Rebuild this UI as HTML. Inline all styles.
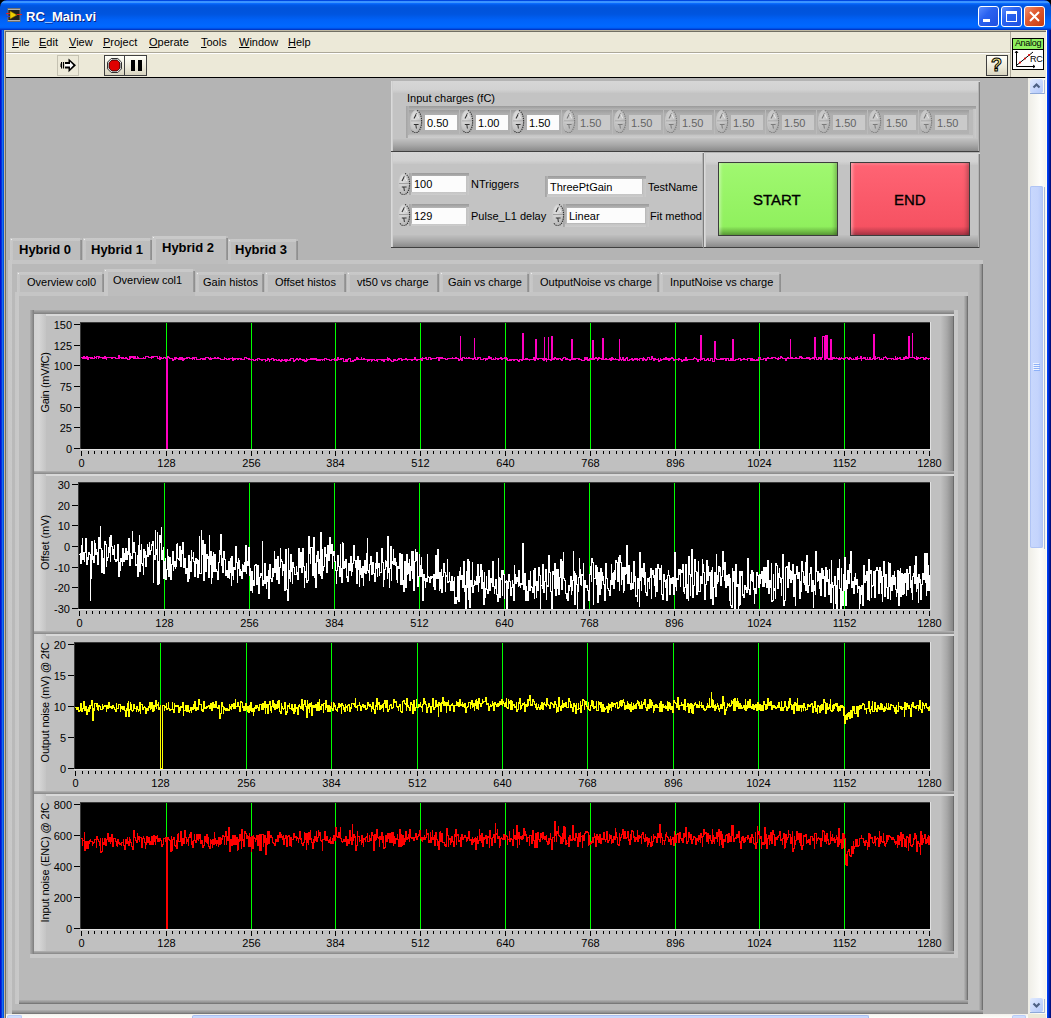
<!DOCTYPE html><html><head><meta charset="utf-8"><style>body{margin:0;width:1051px;height:1018px;overflow:hidden;position:relative;background:#B4B4B4;font-family:'Liberation Sans',sans-serif;}div{box-sizing:content-box}</style></head><body><div style="position:absolute;left:0px;top:0px;width:1051px;height:8px;background:#000;"></div>
<div style="position:absolute;left:0px;top:0px;width:1051px;height:30px;background:linear-gradient(#0047E0 0px,#0047E0 0.8px,#3A93FF 1.2px,#3D95FF 2.6px,#0A6CFF 3.4px,#0058E6 5px,#0053DA 8px,#0055DF 14px,#0062F8 20px,#0068FF 26px,#0060F8 28px,#0040D0 29px,#0030C0 30px);border-radius:7px 7px 0 0;"></div>
<div style="position:absolute;left:0px;top:30px;width:4px;height:988px;background:linear-gradient(90deg,#0010D0 0px,#0010D0 1px,#0830D8 1px,#0830D8 2px,#166EF0 2px,#166EF0 3px,#0050E0 3px);"></div>
<div style="position:absolute;left:1046px;top:30px;width:1px;height:988px;background:#FFFFF4;"></div>
<div style="position:absolute;left:1047px;top:30px;width:4px;height:988px;background:linear-gradient(90deg,#0040F0 0px,#0040F0 1px,#0030D8 1px,#0030D8 2px,#0020A0 2px,#0020A0 3px,#001080 3px);"></div>
<svg style="position:absolute;left:6px;top:8px" width="16" height="15" viewBox="0 0 16 15">
<rect x="2" y="0.5" width="12" height="13" fill="#202020" stroke="#707070"/>
<rect x="2" y="1" width="12" height="1" fill="#b0b0b0"/><rect x="2" y="12" width="12" height="1" fill="#b0b0b0"/>
<path d="M4 3 L11 7 L4 11 Z" fill="#F0D000" stroke="#806000" stroke-width="0.6"/>
<path d="M0 5.5 H4" stroke="#E02020"/><path d="M0 8.5 H4" stroke="#2040E0"/><path d="M11 6.5 H16" stroke="#E02020"/>
</svg>
<div style="position:absolute;left:26px;top:9px;font-size:13px;line-height:15px;font-weight:700;color:#fff;text-shadow:1px 1px 0 #0A1E80;white-space:nowrap">RC_Main.vi</div>
<div style="position:absolute;left:978px;top:6px;width:21px;height:21px;box-sizing:border-box;border:1px solid #fff;border-radius:3px;background:linear-gradient(135deg,#5A8CFF,#2A62F0 40%,#1E50E0);"></div>
<div style="position:absolute;left:1001px;top:6px;width:21px;height:21px;box-sizing:border-box;border:1px solid #fff;border-radius:3px;background:linear-gradient(135deg,#5A8CFF,#2A62F0 40%,#1E50E0);"></div>
<div style="position:absolute;left:1024px;top:6px;width:21px;height:21px;box-sizing:border-box;border:1px solid #fff;border-radius:3px;background:linear-gradient(135deg,#F09070,#E05A30 40%,#C83C10);"></div>
<div style="position:absolute;left:983px;top:19px;width:7px;height:3px;background:#fff;"></div>
<div style="position:absolute;left:1006px;top:11px;width:11px;height:11px;box-sizing:border-box;border:1px solid #fff;border-top:3px solid #fff;"></div>
<svg style="position:absolute;left:1028px;top:10px" width="13" height="13"><path d="M2 2 L11 11 M11 2 L2 11" stroke="#fff" stroke-width="2"/></svg>
<div style="position:absolute;left:4px;top:30px;width:1042px;height:1px;background:#C0B9A2;"></div>
<div style="position:absolute;left:4px;top:31px;width:1042px;height:1px;background:#716F64;"></div>
<div style="position:absolute;left:4px;top:31px;width:1px;height:987px;background:#C0B9A2;"></div>
<div style="position:absolute;left:5px;top:31px;width:1px;height:987px;background:#716F64;"></div>
<div style="position:absolute;left:6px;top:32px;width:1040px;height:45px;background:#ECE9D8;"></div>
<div style="position:absolute;left:6px;top:52px;width:1004px;height:1px;background:#ACA899;"></div>
<div style="position:absolute;left:6px;top:53px;width:1004px;height:1px;background:#FFFFFF;"></div>
<div style="position:absolute;left:1010px;top:32px;width:1px;height:45px;background:#ACA899;"></div>
<div style="position:absolute;left:6px;top:77px;width:1039px;height:1px;background:#000;"></div>
<div style="position:absolute;left:12px;top:36px;font-size:11px;line-height:13px;color:#000;white-space:nowrap"><u style="text-decoration-thickness:1px;text-underline-offset:1px">F</u>ile</div>
<div style="position:absolute;left:39px;top:36px;font-size:11px;line-height:13px;color:#000;white-space:nowrap"><u style="text-decoration-thickness:1px;text-underline-offset:1px">E</u>dit</div>
<div style="position:absolute;left:69px;top:36px;font-size:11px;line-height:13px;color:#000;white-space:nowrap"><u style="text-decoration-thickness:1px;text-underline-offset:1px">V</u>iew</div>
<div style="position:absolute;left:103px;top:36px;font-size:11px;line-height:13px;color:#000;white-space:nowrap"><u style="text-decoration-thickness:1px;text-underline-offset:1px">P</u>roject</div>
<div style="position:absolute;left:149px;top:36px;font-size:11px;line-height:13px;color:#000;white-space:nowrap"><u style="text-decoration-thickness:1px;text-underline-offset:1px">O</u>perate</div>
<div style="position:absolute;left:201px;top:36px;font-size:11px;line-height:13px;color:#000;white-space:nowrap"><u style="text-decoration-thickness:1px;text-underline-offset:1px">T</u>ools</div>
<div style="position:absolute;left:239px;top:36px;font-size:11px;line-height:13px;color:#000;white-space:nowrap"><u style="text-decoration-thickness:1px;text-underline-offset:1px">W</u>indow</div>
<div style="position:absolute;left:288px;top:36px;font-size:11px;line-height:13px;color:#000;white-space:nowrap"><u style="text-decoration-thickness:1px;text-underline-offset:1px">H</u>elp</div>
<div style="position:absolute;left:57px;top:55px;width:22px;height:21px;box-sizing:border-box;border:1px solid #C5C2B2;background:#ECE9D8;"></div>
<svg style="position:absolute;left:59px;top:57px" width="19" height="17" viewBox="0 0 19 17">
<path d="M2 5 H9.5 V1.5 L17 8.3 L9.5 15.2 V11.6 H2 Z" fill="#000"/>
<path d="M6 7 H11 V4.8 L14.4 8.3 L11 11.8 V9.6 H6 Z" fill="#fff"/>
<path d="M3.5 0 V17 M5.5 0 V17" stroke="#ECE9D8" stroke-width="0.9"/>
<path d="M2 6.5 V10 M4.5 6.5 V10" stroke="#000" stroke-width="1"/>
</svg>
<div style="position:absolute;left:104px;top:55px;width:21px;height:21px;box-sizing:border-box;border:1px solid #404040;background:linear-gradient(#FFFFF8,#ECE9D8 60%,#D8D4C0);"></div>
<svg style="position:absolute;left:106px;top:57px" width="17" height="17" viewBox="0 0 17 17"><path d="M5.2 1.5 H11.8 L15.5 5.2 V11.8 L11.8 15.5 H5.2 L1.5 11.8 V5.2 Z" fill="#fff" stroke="#303030" stroke-width="1"/><path d="M5.8 3 H11.2 L14 5.8 V11.2 L11.2 14 H5.8 L3 11.2 V5.8 Z" fill="#E00000" stroke="#000" stroke-width="0.8"/></svg>
<div style="position:absolute;left:125px;top:55px;width:22px;height:21px;box-sizing:border-box;border:1px solid #404040;border-left:none;background:linear-gradient(#FFFFF8,#ECE9D8 60%,#D8D4C0);"></div>
<div style="position:absolute;left:131px;top:60px;width:4px;height:11px;background:#000;"></div>
<div style="position:absolute;left:138px;top:60px;width:4px;height:11px;background:#000;"></div>
<div style="position:absolute;left:986px;top:55px;width:22px;height:21px;box-sizing:border-box;border:1px solid #404040;background:linear-gradient(#FFFFF8,#ECE9D8 60%,#D8D4C0);"></div>
<div style="position:absolute;left:991px;top:55px;font-size:18px;line-height:20px;font-weight:700;color:#F4E88A;-webkit-text-stroke:1px #000;">?</div>
<div style="position:absolute;left:1012px;top:38px;width:32px;height:32px;box-sizing:border-box;border:1px solid #000;background:#fff;"></div>
<div style="position:absolute;left:1013px;top:39px;width:30px;height:10px;background:#90F060;border-bottom:1px solid #000;"></div>
<div style="position:absolute;left:1013px;top:38px;width:30px;text-align:center;font-size:9px;line-height:11px;color:#000;letter-spacing:-0.3px">Analog</div>
<svg style="position:absolute;left:1013px;top:50px" width="30" height="19" viewBox="0 0 30 19">
<path d="M3.5 1 V16.5 H22" stroke="#000" fill="none"/><path d="M2 3 L3.5 1 L5 3 M20 15 L22 16.5 L20 18" stroke="#000" fill="none"/>
<path d="M4 15 L20 2" stroke="#000"/><circle cx="7" cy="12.5" r="1" fill="#E00000"/><circle cx="12" cy="8.5" r="1" fill="#E00000"/><circle cx="16" cy="5" r="1" fill="#E00000"/>
</svg>
<div style="position:absolute;left:1030px;top:54px;font-size:9px;line-height:11px;color:#000;letter-spacing:-0.2px">RC</div>
<div style="position:absolute;left:1028px;top:78px;width:18px;height:936px;background:linear-gradient(90deg,#EEEDE6,#FDFDFA 70%,#F6F5EE);"></div>
<div style="position:absolute;left:1044px;top:80px;width:1px;height:14px;background:#A8B8D8;"></div>
<div style="position:absolute;left:1030px;top:93px;width:14px;height:1px;background:#8EA8D8;"></div>
<div style="position:absolute;left:1030px;top:79px;width:13px;height:14px;border-radius:2px;background:linear-gradient(135deg,#E0EAFE,#C0D2FC 70%,#B4CAFA);"></div>
<svg style="position:absolute;left:1029px;top:79px" width="15" height="14"><path d="M4.5 8.5 L7.5 5.5 L10.5 8.5" stroke="#4D6185" stroke-width="2.2" fill="none"/></svg>
<div style="position:absolute;left:1044px;top:999px;width:1px;height:14px;background:#A8B8D8;"></div>
<div style="position:absolute;left:1030px;top:1012px;width:14px;height:1px;background:#8EA8D8;"></div>
<div style="position:absolute;left:1030px;top:998px;width:13px;height:14px;border-radius:2px;background:linear-gradient(135deg,#E0EAFE,#C0D2FC 70%,#B4CAFA);"></div>
<svg style="position:absolute;left:1029px;top:998px" width="15" height="14"><path d="M4.5 5.5 L7.5 8.5 L10.5 5.5" stroke="#4D6185" stroke-width="2.2" fill="none"/></svg>
<div style="position:absolute;left:1044px;top:187px;width:1px;height:362px;background:#A8B8D8;"></div>
<div style="position:absolute;left:1030px;top:186px;width:13px;height:362px;border-radius:2px;background:linear-gradient(90deg,#C8D8FD,#C4D4FC 60%,#B4C8F8);box-shadow:inset 0 0 0 1px #B0C4F4;"></div>
<div style="position:absolute;left:1033px;top:363px;width:6px;height:1px;background:#EEF4FE;"></div>
<div style="position:absolute;left:1034px;top:364px;width:6px;height:1px;background:#8CB0F8;"></div>
<div style="position:absolute;left:1033px;top:365px;width:6px;height:1px;background:#EEF4FE;"></div>
<div style="position:absolute;left:1034px;top:366px;width:6px;height:1px;background:#8CB0F8;"></div>
<div style="position:absolute;left:1033px;top:367px;width:6px;height:1px;background:#EEF4FE;"></div>
<div style="position:absolute;left:1034px;top:368px;width:6px;height:1px;background:#8CB0F8;"></div>
<div style="position:absolute;left:1033px;top:369px;width:6px;height:1px;background:#EEF4FE;"></div>
<div style="position:absolute;left:1034px;top:370px;width:6px;height:1px;background:#8CB0F8;"></div>
<div style="position:absolute;left:6px;top:1014px;width:1040px;height:4px;background:linear-gradient(#F3F1EC,#FEFEFB);"></div>
<div style="position:absolute;left:7px;top:1015px;width:15px;height:3px;box-sizing:border-box;border:1px solid #B8CCF8;border-bottom:none;border-radius:2px 2px 0 0;background:#D0DEFD;"></div>
<div style="position:absolute;left:192px;top:1015px;width:677px;height:3px;box-sizing:border-box;border:1px solid #A8BEF0;border-bottom:none;border-radius:2px 2px 0 0;background:#C8D8FD;"></div>
<div style="position:absolute;left:1012px;top:1015px;width:14px;height:3px;box-sizing:border-box;border:1px solid #B8CCF8;border-bottom:none;border-radius:2px 2px 0 0;background:#D0DEFD;"></div>
<div style="position:absolute;left:1028px;top:1014px;width:18px;height:4px;background:#ECE9D8;"></div>
<div style="position:absolute;left:6px;top:78px;width:1022px;height:936px;background:#B4B4B4;"></div>
<div style="position:absolute;left:391px;top:81px;width:589px;height:71px;background:#C3C3C3;"><div style="position:absolute;left:0;top:0;right:0;height:12px;background:linear-gradient(#D6D6D6,#D2D2D2 70%,#C6C6C6);"></div><div style="position:absolute;left:0;bottom:0;right:0;height:13px;background:linear-gradient(#C0C0C0,#A8A8A8 50%,#8A8A8A);border-bottom:1px solid #404040;box-sizing:border-box"></div><div style="position:absolute;left:0;top:0;bottom:1px;width:1px;background:#DADADA;"></div><div style="position:absolute;left:1px;top:0;bottom:1px;width:1px;background:#CFCFCF;"></div><div style="position:absolute;right:0;top:1px;bottom:0;width:1px;background:#7E7E7E;"></div><div style="position:absolute;right:1px;top:1px;bottom:1px;width:1px;background:#B4B4B4;"></div></div>
<div style="position:absolute;left:407px;top:92px;font-size:11px;line-height:13px;font-weight:400;color:#000;white-space:nowrap;">Input charges (fC)</div>
<div style="position:absolute;left:406px;top:106px;width:570px;height:32px;background:#BABABA;"><div style="position:absolute;left:0;top:0;right:0;height:4px;background:linear-gradient(#9A9A9A,#A8A8A8 50%,#B6B6B6);"></div><div style="position:absolute;left:0;top:0;bottom:0;width:3px;background:linear-gradient(90deg,#A4A4A4,#B4B4B4);"></div><div style="position:absolute;left:2px;bottom:0;right:0;height:3px;background:linear-gradient(#C4C4C4,#CDCDCD);"></div><div style="position:absolute;right:0;top:3px;bottom:0;width:3px;background:linear-gradient(90deg,#C2C2C2,#CACACA);"></div></div>
<div style="position:absolute;left:409px;top:110px;width:50px;height:24px;background:linear-gradient(#9C9C9C,#AEAEAE 4px,#B2B2B2);"></div>
<svg style="position:absolute;left:410px;top:110px" width="13" height="23" viewBox="0 0 13 23"><defs><radialGradient id="sg230" cx="0.35" cy="0.3" r="0.8"><stop offset="0" stop-color="#E2E2E2"/><stop offset="0.6" stop-color="#C8C8C8"/><stop offset="1" stop-color="#ABABAB"/></radialGradient></defs><ellipse cx="6" cy="11.5" rx="5.7" ry="11.2" fill="url(#sg230)"/><path d="M6 0.3 A5.7 11.2 0 0 0 0.3 11.5 A5.7 11.2 0 0 0 3 21" stroke="#C8C8C8" stroke-width="0.8" fill="none"/><path d="M7 0.5 A5.7 11.2 0 0 1 6 22.7 A5.7 11.2 0 0 1 1.8 20" stroke="#303030" stroke-width="1.1" stroke-dasharray="1.3 0.9" fill="none"/><path d="M1 11.0 H11" stroke="#A0A0A0" stroke-width="1"/><path d="M1 12.0 H11" stroke="#D0D0D0" stroke-width="0.8"/><path d="M4 8.5 L6.6 3.5" stroke="#303030" stroke-width="1.1" fill="none"/><path d="M6.6 4.0 L8.8 8.5" stroke="#EEEEEE" stroke-width="0.9" fill="none"/><path d="M3.8 14.5 H8.6 M5.8 14.5 L6.4 18.5" stroke="#303030" stroke-width="1" fill="none"/></svg>
<div style="position:absolute;left:425px;top:115px;width:32px;height:15px;background:#FCFCFC;"></div>
<div style="position:absolute;left:427px;top:117px;font-size:11px;line-height:13px;color:#000;white-space:nowrap">0.50</div>
<div style="position:absolute;left:460px;top:110px;width:50px;height:24px;background:linear-gradient(#9C9C9C,#AEAEAE 4px,#B2B2B2);"></div>
<svg style="position:absolute;left:461px;top:110px" width="13" height="23" viewBox="0 0 13 23"><defs><radialGradient id="sg230" cx="0.35" cy="0.3" r="0.8"><stop offset="0" stop-color="#E2E2E2"/><stop offset="0.6" stop-color="#C8C8C8"/><stop offset="1" stop-color="#ABABAB"/></radialGradient></defs><ellipse cx="6" cy="11.5" rx="5.7" ry="11.2" fill="url(#sg230)"/><path d="M6 0.3 A5.7 11.2 0 0 0 0.3 11.5 A5.7 11.2 0 0 0 3 21" stroke="#C8C8C8" stroke-width="0.8" fill="none"/><path d="M7 0.5 A5.7 11.2 0 0 1 6 22.7 A5.7 11.2 0 0 1 1.8 20" stroke="#303030" stroke-width="1.1" stroke-dasharray="1.3 0.9" fill="none"/><path d="M1 11.0 H11" stroke="#A0A0A0" stroke-width="1"/><path d="M1 12.0 H11" stroke="#D0D0D0" stroke-width="0.8"/><path d="M4 8.5 L6.6 3.5" stroke="#303030" stroke-width="1.1" fill="none"/><path d="M6.6 4.0 L8.8 8.5" stroke="#EEEEEE" stroke-width="0.9" fill="none"/><path d="M3.8 14.5 H8.6 M5.8 14.5 L6.4 18.5" stroke="#303030" stroke-width="1" fill="none"/></svg>
<div style="position:absolute;left:476px;top:115px;width:32px;height:15px;background:#FCFCFC;"></div>
<div style="position:absolute;left:478px;top:117px;font-size:11px;line-height:13px;color:#000;white-space:nowrap">1.00</div>
<div style="position:absolute;left:511px;top:110px;width:50px;height:24px;background:linear-gradient(#9C9C9C,#AEAEAE 4px,#B2B2B2);"></div>
<svg style="position:absolute;left:512px;top:110px" width="13" height="23" viewBox="0 0 13 23"><defs><radialGradient id="sg230" cx="0.35" cy="0.3" r="0.8"><stop offset="0" stop-color="#E2E2E2"/><stop offset="0.6" stop-color="#C8C8C8"/><stop offset="1" stop-color="#ABABAB"/></radialGradient></defs><ellipse cx="6" cy="11.5" rx="5.7" ry="11.2" fill="url(#sg230)"/><path d="M6 0.3 A5.7 11.2 0 0 0 0.3 11.5 A5.7 11.2 0 0 0 3 21" stroke="#C8C8C8" stroke-width="0.8" fill="none"/><path d="M7 0.5 A5.7 11.2 0 0 1 6 22.7 A5.7 11.2 0 0 1 1.8 20" stroke="#303030" stroke-width="1.1" stroke-dasharray="1.3 0.9" fill="none"/><path d="M1 11.0 H11" stroke="#A0A0A0" stroke-width="1"/><path d="M1 12.0 H11" stroke="#D0D0D0" stroke-width="0.8"/><path d="M4 8.5 L6.6 3.5" stroke="#303030" stroke-width="1.1" fill="none"/><path d="M6.6 4.0 L8.8 8.5" stroke="#EEEEEE" stroke-width="0.9" fill="none"/><path d="M3.8 14.5 H8.6 M5.8 14.5 L6.4 18.5" stroke="#303030" stroke-width="1" fill="none"/></svg>
<div style="position:absolute;left:527px;top:115px;width:32px;height:15px;background:#FCFCFC;"></div>
<div style="position:absolute;left:529px;top:117px;font-size:11px;line-height:13px;color:#000;white-space:nowrap">1.50</div>
<div style="position:absolute;left:562px;top:110px;width:50px;height:24px;background:linear-gradient(#9C9C9C,#AEAEAE 4px,#B2B2B2);"></div>
<svg style="position:absolute;left:563px;top:110px" width="13" height="23" viewBox="0 0 13 23"><defs><radialGradient id="sg231" cx="0.35" cy="0.3" r="0.8"><stop offset="0" stop-color="#D0D0D0"/><stop offset="0.6" stop-color="#BEBEBE"/><stop offset="1" stop-color="#ABABAB"/></radialGradient></defs><ellipse cx="6" cy="11.5" rx="5.7" ry="11.2" fill="url(#sg231)"/><path d="M6 0.3 A5.7 11.2 0 0 0 0.3 11.5 A5.7 11.2 0 0 0 3 21" stroke="#C8C8C8" stroke-width="0.8" fill="none"/><path d="M7 0.5 A5.7 11.2 0 0 1 6 22.7 A5.7 11.2 0 0 1 1.8 20" stroke="#7A7A7A" stroke-width="1.1" stroke-dasharray="1.3 0.9" fill="none"/><path d="M1 11.0 H11" stroke="#A0A0A0" stroke-width="1"/><path d="M1 12.0 H11" stroke="#D0D0D0" stroke-width="0.8"/><path d="M4 8.5 L6.6 3.5" stroke="#7A7A7A" stroke-width="1.1" fill="none"/><path d="M6.6 4.0 L8.8 8.5" stroke="#EEEEEE" stroke-width="0.9" fill="none"/><path d="M3.8 14.5 H8.6 M5.8 14.5 L6.4 18.5" stroke="#7A7A7A" stroke-width="1" fill="none"/></svg>
<div style="position:absolute;left:578px;top:115px;width:32px;height:15px;background:#CACACA;"></div>
<div style="position:absolute;left:580px;top:117px;font-size:11px;line-height:13px;color:#646464;white-space:nowrap">1.50</div>
<div style="position:absolute;left:613px;top:110px;width:50px;height:24px;background:linear-gradient(#9C9C9C,#AEAEAE 4px,#B2B2B2);"></div>
<svg style="position:absolute;left:614px;top:110px" width="13" height="23" viewBox="0 0 13 23"><defs><radialGradient id="sg231" cx="0.35" cy="0.3" r="0.8"><stop offset="0" stop-color="#D0D0D0"/><stop offset="0.6" stop-color="#BEBEBE"/><stop offset="1" stop-color="#ABABAB"/></radialGradient></defs><ellipse cx="6" cy="11.5" rx="5.7" ry="11.2" fill="url(#sg231)"/><path d="M6 0.3 A5.7 11.2 0 0 0 0.3 11.5 A5.7 11.2 0 0 0 3 21" stroke="#C8C8C8" stroke-width="0.8" fill="none"/><path d="M7 0.5 A5.7 11.2 0 0 1 6 22.7 A5.7 11.2 0 0 1 1.8 20" stroke="#7A7A7A" stroke-width="1.1" stroke-dasharray="1.3 0.9" fill="none"/><path d="M1 11.0 H11" stroke="#A0A0A0" stroke-width="1"/><path d="M1 12.0 H11" stroke="#D0D0D0" stroke-width="0.8"/><path d="M4 8.5 L6.6 3.5" stroke="#7A7A7A" stroke-width="1.1" fill="none"/><path d="M6.6 4.0 L8.8 8.5" stroke="#EEEEEE" stroke-width="0.9" fill="none"/><path d="M3.8 14.5 H8.6 M5.8 14.5 L6.4 18.5" stroke="#7A7A7A" stroke-width="1" fill="none"/></svg>
<div style="position:absolute;left:629px;top:115px;width:32px;height:15px;background:#CACACA;"></div>
<div style="position:absolute;left:631px;top:117px;font-size:11px;line-height:13px;color:#646464;white-space:nowrap">1.50</div>
<div style="position:absolute;left:664px;top:110px;width:50px;height:24px;background:linear-gradient(#9C9C9C,#AEAEAE 4px,#B2B2B2);"></div>
<svg style="position:absolute;left:665px;top:110px" width="13" height="23" viewBox="0 0 13 23"><defs><radialGradient id="sg231" cx="0.35" cy="0.3" r="0.8"><stop offset="0" stop-color="#D0D0D0"/><stop offset="0.6" stop-color="#BEBEBE"/><stop offset="1" stop-color="#ABABAB"/></radialGradient></defs><ellipse cx="6" cy="11.5" rx="5.7" ry="11.2" fill="url(#sg231)"/><path d="M6 0.3 A5.7 11.2 0 0 0 0.3 11.5 A5.7 11.2 0 0 0 3 21" stroke="#C8C8C8" stroke-width="0.8" fill="none"/><path d="M7 0.5 A5.7 11.2 0 0 1 6 22.7 A5.7 11.2 0 0 1 1.8 20" stroke="#7A7A7A" stroke-width="1.1" stroke-dasharray="1.3 0.9" fill="none"/><path d="M1 11.0 H11" stroke="#A0A0A0" stroke-width="1"/><path d="M1 12.0 H11" stroke="#D0D0D0" stroke-width="0.8"/><path d="M4 8.5 L6.6 3.5" stroke="#7A7A7A" stroke-width="1.1" fill="none"/><path d="M6.6 4.0 L8.8 8.5" stroke="#EEEEEE" stroke-width="0.9" fill="none"/><path d="M3.8 14.5 H8.6 M5.8 14.5 L6.4 18.5" stroke="#7A7A7A" stroke-width="1" fill="none"/></svg>
<div style="position:absolute;left:680px;top:115px;width:32px;height:15px;background:#CACACA;"></div>
<div style="position:absolute;left:682px;top:117px;font-size:11px;line-height:13px;color:#646464;white-space:nowrap">1.50</div>
<div style="position:absolute;left:715px;top:110px;width:50px;height:24px;background:linear-gradient(#9C9C9C,#AEAEAE 4px,#B2B2B2);"></div>
<svg style="position:absolute;left:716px;top:110px" width="13" height="23" viewBox="0 0 13 23"><defs><radialGradient id="sg231" cx="0.35" cy="0.3" r="0.8"><stop offset="0" stop-color="#D0D0D0"/><stop offset="0.6" stop-color="#BEBEBE"/><stop offset="1" stop-color="#ABABAB"/></radialGradient></defs><ellipse cx="6" cy="11.5" rx="5.7" ry="11.2" fill="url(#sg231)"/><path d="M6 0.3 A5.7 11.2 0 0 0 0.3 11.5 A5.7 11.2 0 0 0 3 21" stroke="#C8C8C8" stroke-width="0.8" fill="none"/><path d="M7 0.5 A5.7 11.2 0 0 1 6 22.7 A5.7 11.2 0 0 1 1.8 20" stroke="#7A7A7A" stroke-width="1.1" stroke-dasharray="1.3 0.9" fill="none"/><path d="M1 11.0 H11" stroke="#A0A0A0" stroke-width="1"/><path d="M1 12.0 H11" stroke="#D0D0D0" stroke-width="0.8"/><path d="M4 8.5 L6.6 3.5" stroke="#7A7A7A" stroke-width="1.1" fill="none"/><path d="M6.6 4.0 L8.8 8.5" stroke="#EEEEEE" stroke-width="0.9" fill="none"/><path d="M3.8 14.5 H8.6 M5.8 14.5 L6.4 18.5" stroke="#7A7A7A" stroke-width="1" fill="none"/></svg>
<div style="position:absolute;left:731px;top:115px;width:32px;height:15px;background:#CACACA;"></div>
<div style="position:absolute;left:733px;top:117px;font-size:11px;line-height:13px;color:#646464;white-space:nowrap">1.50</div>
<div style="position:absolute;left:766px;top:110px;width:50px;height:24px;background:linear-gradient(#9C9C9C,#AEAEAE 4px,#B2B2B2);"></div>
<svg style="position:absolute;left:767px;top:110px" width="13" height="23" viewBox="0 0 13 23"><defs><radialGradient id="sg231" cx="0.35" cy="0.3" r="0.8"><stop offset="0" stop-color="#D0D0D0"/><stop offset="0.6" stop-color="#BEBEBE"/><stop offset="1" stop-color="#ABABAB"/></radialGradient></defs><ellipse cx="6" cy="11.5" rx="5.7" ry="11.2" fill="url(#sg231)"/><path d="M6 0.3 A5.7 11.2 0 0 0 0.3 11.5 A5.7 11.2 0 0 0 3 21" stroke="#C8C8C8" stroke-width="0.8" fill="none"/><path d="M7 0.5 A5.7 11.2 0 0 1 6 22.7 A5.7 11.2 0 0 1 1.8 20" stroke="#7A7A7A" stroke-width="1.1" stroke-dasharray="1.3 0.9" fill="none"/><path d="M1 11.0 H11" stroke="#A0A0A0" stroke-width="1"/><path d="M1 12.0 H11" stroke="#D0D0D0" stroke-width="0.8"/><path d="M4 8.5 L6.6 3.5" stroke="#7A7A7A" stroke-width="1.1" fill="none"/><path d="M6.6 4.0 L8.8 8.5" stroke="#EEEEEE" stroke-width="0.9" fill="none"/><path d="M3.8 14.5 H8.6 M5.8 14.5 L6.4 18.5" stroke="#7A7A7A" stroke-width="1" fill="none"/></svg>
<div style="position:absolute;left:782px;top:115px;width:32px;height:15px;background:#CACACA;"></div>
<div style="position:absolute;left:784px;top:117px;font-size:11px;line-height:13px;color:#646464;white-space:nowrap">1.50</div>
<div style="position:absolute;left:817px;top:110px;width:50px;height:24px;background:linear-gradient(#9C9C9C,#AEAEAE 4px,#B2B2B2);"></div>
<svg style="position:absolute;left:818px;top:110px" width="13" height="23" viewBox="0 0 13 23"><defs><radialGradient id="sg231" cx="0.35" cy="0.3" r="0.8"><stop offset="0" stop-color="#D0D0D0"/><stop offset="0.6" stop-color="#BEBEBE"/><stop offset="1" stop-color="#ABABAB"/></radialGradient></defs><ellipse cx="6" cy="11.5" rx="5.7" ry="11.2" fill="url(#sg231)"/><path d="M6 0.3 A5.7 11.2 0 0 0 0.3 11.5 A5.7 11.2 0 0 0 3 21" stroke="#C8C8C8" stroke-width="0.8" fill="none"/><path d="M7 0.5 A5.7 11.2 0 0 1 6 22.7 A5.7 11.2 0 0 1 1.8 20" stroke="#7A7A7A" stroke-width="1.1" stroke-dasharray="1.3 0.9" fill="none"/><path d="M1 11.0 H11" stroke="#A0A0A0" stroke-width="1"/><path d="M1 12.0 H11" stroke="#D0D0D0" stroke-width="0.8"/><path d="M4 8.5 L6.6 3.5" stroke="#7A7A7A" stroke-width="1.1" fill="none"/><path d="M6.6 4.0 L8.8 8.5" stroke="#EEEEEE" stroke-width="0.9" fill="none"/><path d="M3.8 14.5 H8.6 M5.8 14.5 L6.4 18.5" stroke="#7A7A7A" stroke-width="1" fill="none"/></svg>
<div style="position:absolute;left:833px;top:115px;width:32px;height:15px;background:#CACACA;"></div>
<div style="position:absolute;left:835px;top:117px;font-size:11px;line-height:13px;color:#646464;white-space:nowrap">1.50</div>
<div style="position:absolute;left:868px;top:110px;width:50px;height:24px;background:linear-gradient(#9C9C9C,#AEAEAE 4px,#B2B2B2);"></div>
<svg style="position:absolute;left:869px;top:110px" width="13" height="23" viewBox="0 0 13 23"><defs><radialGradient id="sg231" cx="0.35" cy="0.3" r="0.8"><stop offset="0" stop-color="#D0D0D0"/><stop offset="0.6" stop-color="#BEBEBE"/><stop offset="1" stop-color="#ABABAB"/></radialGradient></defs><ellipse cx="6" cy="11.5" rx="5.7" ry="11.2" fill="url(#sg231)"/><path d="M6 0.3 A5.7 11.2 0 0 0 0.3 11.5 A5.7 11.2 0 0 0 3 21" stroke="#C8C8C8" stroke-width="0.8" fill="none"/><path d="M7 0.5 A5.7 11.2 0 0 1 6 22.7 A5.7 11.2 0 0 1 1.8 20" stroke="#7A7A7A" stroke-width="1.1" stroke-dasharray="1.3 0.9" fill="none"/><path d="M1 11.0 H11" stroke="#A0A0A0" stroke-width="1"/><path d="M1 12.0 H11" stroke="#D0D0D0" stroke-width="0.8"/><path d="M4 8.5 L6.6 3.5" stroke="#7A7A7A" stroke-width="1.1" fill="none"/><path d="M6.6 4.0 L8.8 8.5" stroke="#EEEEEE" stroke-width="0.9" fill="none"/><path d="M3.8 14.5 H8.6 M5.8 14.5 L6.4 18.5" stroke="#7A7A7A" stroke-width="1" fill="none"/></svg>
<div style="position:absolute;left:884px;top:115px;width:32px;height:15px;background:#CACACA;"></div>
<div style="position:absolute;left:886px;top:117px;font-size:11px;line-height:13px;color:#646464;white-space:nowrap">1.50</div>
<div style="position:absolute;left:919px;top:110px;width:50px;height:24px;background:linear-gradient(#9C9C9C,#AEAEAE 4px,#B2B2B2);"></div>
<svg style="position:absolute;left:920px;top:110px" width="13" height="23" viewBox="0 0 13 23"><defs><radialGradient id="sg231" cx="0.35" cy="0.3" r="0.8"><stop offset="0" stop-color="#D0D0D0"/><stop offset="0.6" stop-color="#BEBEBE"/><stop offset="1" stop-color="#ABABAB"/></radialGradient></defs><ellipse cx="6" cy="11.5" rx="5.7" ry="11.2" fill="url(#sg231)"/><path d="M6 0.3 A5.7 11.2 0 0 0 0.3 11.5 A5.7 11.2 0 0 0 3 21" stroke="#C8C8C8" stroke-width="0.8" fill="none"/><path d="M7 0.5 A5.7 11.2 0 0 1 6 22.7 A5.7 11.2 0 0 1 1.8 20" stroke="#7A7A7A" stroke-width="1.1" stroke-dasharray="1.3 0.9" fill="none"/><path d="M1 11.0 H11" stroke="#A0A0A0" stroke-width="1"/><path d="M1 12.0 H11" stroke="#D0D0D0" stroke-width="0.8"/><path d="M4 8.5 L6.6 3.5" stroke="#7A7A7A" stroke-width="1.1" fill="none"/><path d="M6.6 4.0 L8.8 8.5" stroke="#EEEEEE" stroke-width="0.9" fill="none"/><path d="M3.8 14.5 H8.6 M5.8 14.5 L6.4 18.5" stroke="#7A7A7A" stroke-width="1" fill="none"/></svg>
<div style="position:absolute;left:935px;top:115px;width:32px;height:15px;background:#CACACA;"></div>
<div style="position:absolute;left:937px;top:117px;font-size:11px;line-height:13px;color:#646464;white-space:nowrap">1.50</div>
<div style="position:absolute;left:391px;top:152px;width:313px;height:96px;background:#C3C3C3;"><div style="position:absolute;left:0;top:0;right:0;height:12px;background:linear-gradient(#D6D6D6,#D2D2D2 70%,#C6C6C6);"></div><div style="position:absolute;left:0;bottom:0;right:0;height:13px;background:linear-gradient(#C0C0C0,#A8A8A8 50%,#8A8A8A);border-bottom:1px solid #404040;box-sizing:border-box"></div><div style="position:absolute;left:0;top:0;bottom:1px;width:1px;background:#DADADA;"></div><div style="position:absolute;left:1px;top:0;bottom:1px;width:1px;background:#CFCFCF;"></div><div style="position:absolute;right:0;top:1px;bottom:0;width:1px;background:#7E7E7E;"></div><div style="position:absolute;right:1px;top:1px;bottom:1px;width:1px;background:#B4B4B4;"></div></div>
<div style="position:absolute;left:409px;top:173px;width:60px;height:22px;background:#BABABA;"><div style="position:absolute;left:0;top:0;right:0;height:4px;background:linear-gradient(#9A9A9A,#A8A8A8 50%,#B6B6B6);"></div><div style="position:absolute;left:0;top:0;bottom:0;width:3px;background:linear-gradient(90deg,#A4A4A4,#B4B4B4);"></div><div style="position:absolute;left:2px;bottom:0;right:0;height:3px;background:linear-gradient(#C4C4C4,#CDCDCD);"></div><div style="position:absolute;right:0;top:3px;bottom:0;width:3px;background:linear-gradient(90deg,#C2C2C2,#CACACA);"></div></div>
<svg style="position:absolute;left:398px;top:173px" width="13" height="22" viewBox="0 0 13 22"><defs><radialGradient id="sg220" cx="0.35" cy="0.3" r="0.8"><stop offset="0" stop-color="#E2E2E2"/><stop offset="0.6" stop-color="#C8C8C8"/><stop offset="1" stop-color="#ABABAB"/></radialGradient></defs><ellipse cx="6" cy="11.0" rx="5.7" ry="10.7" fill="url(#sg220)"/><path d="M6 0.3 A5.7 10.7 0 0 0 0.3 11.0 A5.7 10.7 0 0 0 3 20" stroke="#C8C8C8" stroke-width="0.8" fill="none"/><path d="M7 0.5 A5.7 10.7 0 0 1 6 21.7 A5.7 10.7 0 0 1 1.8 19" stroke="#303030" stroke-width="1.1" stroke-dasharray="1.3 0.9" fill="none"/><path d="M1 10.5 H11" stroke="#A0A0A0" stroke-width="1"/><path d="M1 11.5 H11" stroke="#D0D0D0" stroke-width="0.8"/><path d="M4 8.0 L6.6 3.0" stroke="#303030" stroke-width="1.1" fill="none"/><path d="M6.6 3.5 L8.8 8.0" stroke="#EEEEEE" stroke-width="0.9" fill="none"/><path d="M3.8 14.0 H8.6 M5.8 14.0 L6.4 18.0" stroke="#303030" stroke-width="1" fill="none"/></svg>
<div style="position:absolute;left:412px;top:176px;width:54px;height:16px;background:#FCFCFC;"></div>
<div style="position:absolute;left:414px;top:178px;font-size:11px;line-height:13px;color:#000;white-space:nowrap">100</div>
<div style="position:absolute;left:471px;top:178px;font-size:11px;line-height:13px;font-weight:400;color:#000;white-space:nowrap;">NTriggers</div>
<div style="position:absolute;left:409px;top:204px;width:60px;height:22px;background:#BABABA;"><div style="position:absolute;left:0;top:0;right:0;height:4px;background:linear-gradient(#9A9A9A,#A8A8A8 50%,#B6B6B6);"></div><div style="position:absolute;left:0;top:0;bottom:0;width:3px;background:linear-gradient(90deg,#A4A4A4,#B4B4B4);"></div><div style="position:absolute;left:2px;bottom:0;right:0;height:3px;background:linear-gradient(#C4C4C4,#CDCDCD);"></div><div style="position:absolute;right:0;top:3px;bottom:0;width:3px;background:linear-gradient(90deg,#C2C2C2,#CACACA);"></div></div>
<svg style="position:absolute;left:398px;top:204px" width="13" height="22" viewBox="0 0 13 22"><defs><radialGradient id="sg220" cx="0.35" cy="0.3" r="0.8"><stop offset="0" stop-color="#E2E2E2"/><stop offset="0.6" stop-color="#C8C8C8"/><stop offset="1" stop-color="#ABABAB"/></radialGradient></defs><ellipse cx="6" cy="11.0" rx="5.7" ry="10.7" fill="url(#sg220)"/><path d="M6 0.3 A5.7 10.7 0 0 0 0.3 11.0 A5.7 10.7 0 0 0 3 20" stroke="#C8C8C8" stroke-width="0.8" fill="none"/><path d="M7 0.5 A5.7 10.7 0 0 1 6 21.7 A5.7 10.7 0 0 1 1.8 19" stroke="#303030" stroke-width="1.1" stroke-dasharray="1.3 0.9" fill="none"/><path d="M1 10.5 H11" stroke="#A0A0A0" stroke-width="1"/><path d="M1 11.5 H11" stroke="#D0D0D0" stroke-width="0.8"/><path d="M4 8.0 L6.6 3.0" stroke="#303030" stroke-width="1.1" fill="none"/><path d="M6.6 3.5 L8.8 8.0" stroke="#EEEEEE" stroke-width="0.9" fill="none"/><path d="M3.8 14.0 H8.6 M5.8 14.0 L6.4 18.0" stroke="#303030" stroke-width="1" fill="none"/></svg>
<div style="position:absolute;left:412px;top:208px;width:54px;height:16px;background:#FCFCFC;"></div>
<div style="position:absolute;left:414px;top:210px;font-size:11px;line-height:13px;color:#000;white-space:nowrap">129</div>
<div style="position:absolute;left:471px;top:210px;font-size:11px;line-height:13px;font-weight:400;color:#000;white-space:nowrap;">Pulse_L1 delay</div>
<div style="position:absolute;left:545px;top:176px;width:101px;height:21px;background:#BABABA;"><div style="position:absolute;left:0;top:0;right:0;height:4px;background:linear-gradient(#9A9A9A,#A8A8A8 50%,#B6B6B6);"></div><div style="position:absolute;left:0;top:0;bottom:0;width:3px;background:linear-gradient(90deg,#A4A4A4,#B4B4B4);"></div><div style="position:absolute;left:2px;bottom:0;right:0;height:3px;background:linear-gradient(#C4C4C4,#CDCDCD);"></div><div style="position:absolute;right:0;top:3px;bottom:0;width:3px;background:linear-gradient(90deg,#C2C2C2,#CACACA);"></div></div>
<div style="position:absolute;left:548px;top:179px;width:94px;height:15px;background:#FCFCFC;"></div>
<div style="position:absolute;left:550px;top:181px;font-size:11px;line-height:13px;color:#000;white-space:nowrap">ThreePtGain</div>
<div style="position:absolute;left:648px;top:181px;font-size:11px;line-height:13px;font-weight:400;color:#000;white-space:nowrap;">TestName</div>
<div style="position:absolute;left:563px;top:204px;width:86px;height:23px;background:#BABABA;"><div style="position:absolute;left:0;top:0;right:0;height:4px;background:linear-gradient(#9A9A9A,#A8A8A8 50%,#B6B6B6);"></div><div style="position:absolute;left:0;top:0;bottom:0;width:3px;background:linear-gradient(90deg,#A4A4A4,#B4B4B4);"></div><div style="position:absolute;left:2px;bottom:0;right:0;height:3px;background:linear-gradient(#C4C4C4,#CDCDCD);"></div><div style="position:absolute;right:0;top:3px;bottom:0;width:3px;background:linear-gradient(90deg,#C2C2C2,#CACACA);"></div></div>
<svg style="position:absolute;left:552px;top:204px" width="13" height="22" viewBox="0 0 13 22"><defs><radialGradient id="sg220" cx="0.35" cy="0.3" r="0.8"><stop offset="0" stop-color="#E2E2E2"/><stop offset="0.6" stop-color="#C8C8C8"/><stop offset="1" stop-color="#ABABAB"/></radialGradient></defs><ellipse cx="6" cy="11.0" rx="5.7" ry="10.7" fill="url(#sg220)"/><path d="M6 0.3 A5.7 10.7 0 0 0 0.3 11.0 A5.7 10.7 0 0 0 3 20" stroke="#C8C8C8" stroke-width="0.8" fill="none"/><path d="M7 0.5 A5.7 10.7 0 0 1 6 21.7 A5.7 10.7 0 0 1 1.8 19" stroke="#303030" stroke-width="1.1" stroke-dasharray="1.3 0.9" fill="none"/><path d="M1 10.5 H11" stroke="#A0A0A0" stroke-width="1"/><path d="M1 11.5 H11" stroke="#D0D0D0" stroke-width="0.8"/><path d="M4 8.0 L6.6 3.0" stroke="#303030" stroke-width="1.1" fill="none"/><path d="M6.6 3.5 L8.8 8.0" stroke="#EEEEEE" stroke-width="0.9" fill="none"/><path d="M3.8 14.0 H8.6 M5.8 14.0 L6.4 18.0" stroke="#303030" stroke-width="1" fill="none"/></svg>
<div style="position:absolute;left:567px;top:208px;width:78px;height:15px;background:#FCFCFC;"></div>
<div style="position:absolute;left:569px;top:210px;font-size:11px;line-height:13px;color:#000;white-space:nowrap">Linear</div>
<div style="position:absolute;left:650px;top:210px;font-size:11px;line-height:13px;font-weight:400;color:#000;white-space:nowrap;">Fit method</div>
<div style="position:absolute;left:704px;top:153px;width:276px;height:95px;background:#C3C3C3;"><div style="position:absolute;left:0;top:0;right:0;height:12px;background:linear-gradient(#D6D6D6,#D2D2D2 70%,#C6C6C6);"></div><div style="position:absolute;left:0;bottom:0;right:0;height:13px;background:linear-gradient(#C0C0C0,#A8A8A8 50%,#8A8A8A);border-bottom:1px solid #404040;box-sizing:border-box"></div><div style="position:absolute;left:0;top:0;bottom:1px;width:1px;background:#DADADA;"></div><div style="position:absolute;left:1px;top:0;bottom:1px;width:1px;background:#CFCFCF;"></div><div style="position:absolute;right:0;top:1px;bottom:0;width:1px;background:#7E7E7E;"></div><div style="position:absolute;right:1px;top:1px;bottom:1px;width:1px;background:#B4B4B4;"></div></div>
<div style="position:absolute;left:718px;top:162px;width:120px;height:74px;box-sizing:border-box;border:1px solid #3C3C3C;background:linear-gradient(#A0F870,#90F05E 88%,#5A9A36);box-shadow:inset 4px 0 3px -2px rgba(255,255,255,0.35),inset -4px 0 4px -2px rgba(0,0,0,0.28),inset 0 3px 2px -1px rgba(255,255,255,0.15);"></div>
<div style="position:absolute;left:753px;top:191px;font-size:15px;line-height:17px;font-weight:400;color:#000;white-space:nowrap;-webkit-text-stroke:0.35px #000;">START</div>
<div style="position:absolute;left:850px;top:162px;width:120px;height:74px;box-sizing:border-box;border:1px solid #3C3C3C;background:linear-gradient(#FF6474,#F65262 88%,#A83444);box-shadow:inset 4px 0 3px -2px rgba(255,255,255,0.35),inset -4px 0 4px -2px rgba(0,0,0,0.28),inset 0 3px 2px -1px rgba(255,255,255,0.15);"></div>
<div style="position:absolute;left:894px;top:191px;font-size:15px;line-height:17px;font-weight:400;color:#000;white-space:nowrap;-webkit-text-stroke:0.35px #000;">END</div>
<div style="position:absolute;left:8px;top:260px;width:975px;height:754px;background:#B9B9B9;"><div style="position:absolute;left:0;top:0;right:0;height:4px;background:#C5C5C5;"></div><div style="position:absolute;left:0;top:0;bottom:0;width:4px;background:linear-gradient(90deg,#C6C6C6,#C9C9C9);"></div><div style="position:absolute;right:0;top:4px;bottom:0;width:4px;background:linear-gradient(90deg,#B4B4B4,#8C8C8C 70%,#5E5E5E);"></div><div style="position:absolute;left:4px;bottom:0;right:0;height:4px;background:linear-gradient(#B0B0B0,#8C8C8C 70%,#6A6A6A);"></div></div>
<div style="position:absolute;left:10px;top:238px;width:72px;height:22px;background:#BDBDBD;"><div style="position:absolute;left:0;top:0;right:2px;height:3px;background:linear-gradient(#C9C9C9,#C6C6C6);"></div><div style="position:absolute;left:0;top:0;bottom:0;width:3px;background:linear-gradient(90deg,#C9C9C9,#C5C5C5);"></div><div style="position:absolute;left:1px;top:1px;width:1px;height:1px;background:#F0F0F0;box-shadow:0 0 1px #fff"></div><div style="position:absolute;right:0;top:2px;bottom:0;width:2px;background:linear-gradient(90deg,#A0A0A0,#8A8A8A);"></div></div>
<div style="position:absolute;left:19px;top:242px;font-size:13px;line-height:15px;font-weight:700;color:#000;white-space:nowrap;">Hybrid 0</div>
<div style="position:absolute;left:83px;top:238px;width:69px;height:22px;background:#BDBDBD;"><div style="position:absolute;left:0;top:0;right:2px;height:3px;background:linear-gradient(#C9C9C9,#C6C6C6);"></div><div style="position:absolute;left:0;top:0;bottom:0;width:3px;background:linear-gradient(90deg,#C9C9C9,#C5C5C5);"></div><div style="position:absolute;left:1px;top:1px;width:1px;height:1px;background:#F0F0F0;box-shadow:0 0 1px #fff"></div><div style="position:absolute;right:0;top:2px;bottom:0;width:2px;background:linear-gradient(90deg,#A0A0A0,#8A8A8A);"></div></div>
<div style="position:absolute;left:91px;top:242px;font-size:13px;line-height:15px;font-weight:700;color:#000;white-space:nowrap;">Hybrid 1</div>
<div style="position:absolute;left:228px;top:239px;width:70px;height:21px;background:#BDBDBD;"><div style="position:absolute;left:0;top:0;right:2px;height:3px;background:linear-gradient(#C9C9C9,#C6C6C6);"></div><div style="position:absolute;left:0;top:0;bottom:0;width:3px;background:linear-gradient(90deg,#C9C9C9,#C5C5C5);"></div><div style="position:absolute;left:1px;top:1px;width:1px;height:1px;background:#F0F0F0;box-shadow:0 0 1px #fff"></div><div style="position:absolute;right:0;top:2px;bottom:0;width:2px;background:linear-gradient(90deg,#A0A0A0,#8A8A8A);"></div></div>
<div style="position:absolute;left:235px;top:242px;font-size:13px;line-height:15px;font-weight:700;color:#000;white-space:nowrap;">Hybrid 3</div>
<div style="position:absolute;left:152px;top:236px;width:76px;height:28px;background:#BDBDBD;"><div style="position:absolute;left:0;top:0;right:2px;height:3px;background:#C9C9C9;"></div><div style="position:absolute;left:0;top:0;bottom:0;width:4px;background:#C8C8C8;"></div><div style="position:absolute;left:1px;top:1px;width:1px;height:1px;background:#F0F0F0;"></div><div style="position:absolute;right:0;top:2px;bottom:4px;width:2px;background:linear-gradient(90deg,#A0A0A0,#8A8A8A);"></div></div>
<div style="position:absolute;left:162px;top:240px;font-size:13px;line-height:15px;font-weight:700;color:#000;white-space:nowrap;">Hybrid 2</div>
<div style="position:absolute;left:15px;top:292px;width:953px;height:712px;background:#B9B9B9;"><div style="position:absolute;left:0;top:0;right:0;height:4px;background:#C5C5C5;"></div><div style="position:absolute;left:0;top:0;bottom:0;width:4px;background:linear-gradient(90deg,#C6C6C6,#C9C9C9);"></div><div style="position:absolute;right:0;top:4px;bottom:0;width:4px;background:linear-gradient(90deg,#B4B4B4,#8C8C8C 70%,#5E5E5E);"></div><div style="position:absolute;left:4px;bottom:0;right:0;height:4px;background:linear-gradient(#B0B0B0,#8C8C8C 70%,#6A6A6A);"></div></div>
<div style="position:absolute;left:17px;top:272px;width:87px;height:20px;background:#BDBDBD;"><div style="position:absolute;left:0;top:0;right:2px;height:3px;background:linear-gradient(#C9C9C9,#C6C6C6);"></div><div style="position:absolute;left:0;top:0;bottom:0;width:3px;background:linear-gradient(90deg,#C9C9C9,#C5C5C5);"></div><div style="position:absolute;left:1px;top:1px;width:1px;height:1px;background:#F0F0F0;box-shadow:0 0 1px #fff"></div><div style="position:absolute;right:0;top:2px;bottom:0;width:2px;background:linear-gradient(90deg,#A0A0A0,#8A8A8A);"></div></div>
<div style="position:absolute;left:27px;top:276px;font-size:11px;line-height:13px;font-weight:400;color:#000;white-space:nowrap;">Overview col0</div>
<div style="position:absolute;left:196px;top:272px;width:68px;height:20px;background:#BDBDBD;"><div style="position:absolute;left:0;top:0;right:2px;height:3px;background:linear-gradient(#C9C9C9,#C6C6C6);"></div><div style="position:absolute;left:0;top:0;bottom:0;width:3px;background:linear-gradient(90deg,#C9C9C9,#C5C5C5);"></div><div style="position:absolute;left:1px;top:1px;width:1px;height:1px;background:#F0F0F0;box-shadow:0 0 1px #fff"></div><div style="position:absolute;right:0;top:2px;bottom:0;width:2px;background:linear-gradient(90deg,#A0A0A0,#8A8A8A);"></div></div>
<div style="position:absolute;left:203px;top:276px;font-size:11px;line-height:13px;font-weight:400;color:#000;white-space:nowrap;">Gain histos</div>
<div style="position:absolute;left:265px;top:272px;width:81px;height:20px;background:#BDBDBD;"><div style="position:absolute;left:0;top:0;right:2px;height:3px;background:linear-gradient(#C9C9C9,#C6C6C6);"></div><div style="position:absolute;left:0;top:0;bottom:0;width:3px;background:linear-gradient(90deg,#C9C9C9,#C5C5C5);"></div><div style="position:absolute;left:1px;top:1px;width:1px;height:1px;background:#F0F0F0;box-shadow:0 0 1px #fff"></div><div style="position:absolute;right:0;top:2px;bottom:0;width:2px;background:linear-gradient(90deg,#A0A0A0,#8A8A8A);"></div></div>
<div style="position:absolute;left:275px;top:276px;font-size:11px;line-height:13px;font-weight:400;color:#000;white-space:nowrap;">Offset histos</div>
<div style="position:absolute;left:347px;top:272px;width:92px;height:20px;background:#BDBDBD;"><div style="position:absolute;left:0;top:0;right:2px;height:3px;background:linear-gradient(#C9C9C9,#C6C6C6);"></div><div style="position:absolute;left:0;top:0;bottom:0;width:3px;background:linear-gradient(90deg,#C9C9C9,#C5C5C5);"></div><div style="position:absolute;left:1px;top:1px;width:1px;height:1px;background:#F0F0F0;box-shadow:0 0 1px #fff"></div><div style="position:absolute;right:0;top:2px;bottom:0;width:2px;background:linear-gradient(90deg,#A0A0A0,#8A8A8A);"></div></div>
<div style="position:absolute;left:357px;top:276px;font-size:11px;line-height:13px;font-weight:400;color:#000;white-space:nowrap;">vt50 vs charge</div>
<div style="position:absolute;left:440px;top:272px;width:89px;height:20px;background:#BDBDBD;"><div style="position:absolute;left:0;top:0;right:2px;height:3px;background:linear-gradient(#C9C9C9,#C6C6C6);"></div><div style="position:absolute;left:0;top:0;bottom:0;width:3px;background:linear-gradient(90deg,#C9C9C9,#C5C5C5);"></div><div style="position:absolute;left:1px;top:1px;width:1px;height:1px;background:#F0F0F0;box-shadow:0 0 1px #fff"></div><div style="position:absolute;right:0;top:2px;bottom:0;width:2px;background:linear-gradient(90deg,#A0A0A0,#8A8A8A);"></div></div>
<div style="position:absolute;left:448px;top:276px;font-size:11px;line-height:13px;font-weight:400;color:#000;white-space:nowrap;">Gain vs charge</div>
<div style="position:absolute;left:530px;top:272px;width:129px;height:20px;background:#BDBDBD;"><div style="position:absolute;left:0;top:0;right:2px;height:3px;background:linear-gradient(#C9C9C9,#C6C6C6);"></div><div style="position:absolute;left:0;top:0;bottom:0;width:3px;background:linear-gradient(90deg,#C9C9C9,#C5C5C5);"></div><div style="position:absolute;left:1px;top:1px;width:1px;height:1px;background:#F0F0F0;box-shadow:0 0 1px #fff"></div><div style="position:absolute;right:0;top:2px;bottom:0;width:2px;background:linear-gradient(90deg,#A0A0A0,#8A8A8A);"></div></div>
<div style="position:absolute;left:540px;top:276px;font-size:11px;line-height:13px;font-weight:400;color:#000;white-space:nowrap;">OutputNoise vs charge</div>
<div style="position:absolute;left:660px;top:272px;width:121px;height:20px;background:#BDBDBD;"><div style="position:absolute;left:0;top:0;right:2px;height:3px;background:linear-gradient(#C9C9C9,#C6C6C6);"></div><div style="position:absolute;left:0;top:0;bottom:0;width:3px;background:linear-gradient(90deg,#C9C9C9,#C5C5C5);"></div><div style="position:absolute;left:1px;top:1px;width:1px;height:1px;background:#F0F0F0;box-shadow:0 0 1px #fff"></div><div style="position:absolute;right:0;top:2px;bottom:0;width:2px;background:linear-gradient(90deg,#A0A0A0,#8A8A8A);"></div></div>
<div style="position:absolute;left:670px;top:276px;font-size:11px;line-height:13px;font-weight:400;color:#000;white-space:nowrap;">InputNoise vs charge</div>
<div style="position:absolute;left:104px;top:269px;width:91px;height:27px;background:#BDBDBD;"><div style="position:absolute;left:0;top:0;right:2px;height:3px;background:#C9C9C9;"></div><div style="position:absolute;left:0;top:0;bottom:0;width:4px;background:#C8C8C8;"></div><div style="position:absolute;left:1px;top:1px;width:1px;height:1px;background:#F0F0F0;"></div><div style="position:absolute;right:0;top:2px;bottom:4px;width:2px;background:linear-gradient(90deg,#A0A0A0,#8A8A8A);"></div></div>
<div style="position:absolute;left:113px;top:274px;font-size:11px;line-height:13px;font-weight:400;color:#000;white-space:nowrap;">Overview col1</div>
<div style="position:absolute;left:30px;top:310px;width:928px;height:648px;background:#C8C8C8;"><div style="position:absolute;left:0;top:0;right:4px;height:4px;background:linear-gradient(#ACACAC,#969696 50%,#7E7E7E);"></div><div style="position:absolute;left:0;top:0;bottom:4px;width:4px;background:linear-gradient(90deg,#ACACAC,#969696 50%,#7C7C7C);"></div></div>
<div style="position:absolute;left:34px;top:314px;width:920px;height:160px;background:#C0C0C0;"><div style="position:absolute;left:0;top:0;right:0;height:2px;background:#D9D9D9;"></div><div style="position:absolute;left:0;top:0;bottom:0;width:12px;background:linear-gradient(90deg,#D2D2D2,#D6D6D6 40%,#C4C4C4);"></div><div style="position:absolute;right:0;top:2px;bottom:0;width:14px;background:linear-gradient(90deg,#C2C2C2,#A8A8A8 50%,#888888 90%,#5A5A5A);"></div><div style="position:absolute;left:0;right:0;bottom:0;height:3px;background:linear-gradient(#B4B4B4,#9C9C9C 50%,#858585);"></div></div>
<svg style="position:absolute;left:80px;top:322px" width="851" height="128" shape-rendering="crispEdges"><rect x="0" y="0" width="851" height="128" fill="#E2E2E2"/><rect x="0" y="0" width="850" height="127" fill="#3A3A3A"/><rect x="1" y="1" width="849" height="126" fill="#000"/><g transform="translate(1,1)"><path d="M85.5 0V126M170.5 0V126M254.5 0V126M339.5 0V126M424.5 0V126M509.5 0V126M594.5 0V126M678.5 0V126M763.5 0V126" stroke="#00FF00" stroke-width="1"/><path d="M0.5 34V35M1.5 34V36M2.5 33V36M3.5 33V36M4.5 34V36M5.5 33V36M6.5 33V37M7.5 34V37M8.5 34V35M9.5 34V36M10.5 34V36M11.5 34V36M12.5 35V36M13.5 33V36M14.5 34V35M15.5 33V36M16.5 33V34M17.5 33V36M18.5 33V35M19.5 34V35M20.5 34V35M21.5 34V36M22.5 34V36M23.5 33V36M24.5 33V36M25.5 34V37M26.5 34V35M27.5 34V35M28.5 34V35M29.5 34V35M30.5 34V36M31.5 34V36M32.5 34V35M33.5 34V35M34.5 34V36M35.5 35V36M36.5 35V36M37.5 32V36M38.5 32V36M39.5 34V35M40.5 34V36M41.5 34V36M42.5 34V36M43.5 35V36M44.5 34V36M45.5 34V36M46.5 35V37M47.5 36V37M48.5 33V37M49.5 33V36M50.5 33V35M51.5 33V35M52.5 33V36M53.5 33V36M54.5 33V36M55.5 35V36M56.5 33V36M57.5 34V36M58.5 35V36M59.5 35V36M60.5 35V36M61.5 35V36M62.5 34V36M63.5 35V36M64.5 33V36M65.5 33V34M66.5 33V34M67.5 33V35M68.5 34V35M69.5 34V35M70.5 33V36M71.5 33V35M72.5 33V35M73.5 33V34M74.5 33V34M75.5 33V34M76.5 33V36M77.5 35V36M78.5 33V37M79.5 34V37M80.5 34V36M81.5 35V36M82.5 34V36M83.5 34V35M84.5 34V36M85.5 35V126M86.5 33V126M87.5 33V35M88.5 34V36M89.5 35V36M90.5 35V36M91.5 35V38M92.5 36V38M93.5 34V37M94.5 34V37M95.5 34V36M96.5 35V36M97.5 35V37M98.5 34V37M99.5 34V37M100.5 34V37M101.5 34V38M102.5 35V38M103.5 35V37M104.5 35V36M105.5 34V36M106.5 34V36M107.5 34V35M108.5 34V36M109.5 35V36M110.5 35V36M111.5 34V37M112.5 34V36M113.5 34V37M114.5 34V35M115.5 34V37M116.5 36V37M117.5 36V37M118.5 36V37M119.5 35V37M120.5 35V36M121.5 35V37M122.5 35V37M123.5 35V37M124.5 34V37M125.5 34V35M126.5 34V35M127.5 34V36M128.5 35V37M129.5 34V37M130.5 35V37M131.5 35V36M132.5 35V36M133.5 34V36M134.5 34V36M135.5 35V36M136.5 34V36M137.5 34V36M138.5 35V36M139.5 35V37M140.5 36V37M141.5 36V37M142.5 36V37M143.5 34V37M144.5 35V36M145.5 35V37M146.5 36V37M147.5 35V37M148.5 35V37M149.5 35V36M150.5 35V36M151.5 34V38M152.5 35V38M153.5 35V37M154.5 35V37M155.5 35V36M156.5 35V37M157.5 35V37M158.5 35V36M159.5 35V37M160.5 35V37M161.5 36V37M162.5 36V37M163.5 34V37M164.5 34V35M165.5 34V36M166.5 35V36M167.5 35V37M168.5 35V37M169.5 36V37M170.5 36V38M171.5 36V37M172.5 36V38M173.5 37V38M174.5 36V38M175.5 36V37M176.5 35V38M177.5 35V36M178.5 35V37M179.5 36V37M180.5 36V38M181.5 36V38M182.5 36V37M183.5 36V37M184.5 36V39M185.5 37V38M186.5 35V38M187.5 35V37M188.5 36V39M189.5 36V37M190.5 35V37M191.5 35V36M192.5 35V38M193.5 36V38M194.5 36V37M195.5 36V38M196.5 37V38M197.5 36V38M198.5 36V38M199.5 37V39M200.5 36V39M201.5 36V38M202.5 37V38M203.5 36V38M204.5 36V39M205.5 36V39M206.5 36V38M207.5 37V38M208.5 36V38M209.5 35V38M210.5 35V36M211.5 35V36M212.5 35V39M213.5 37V39M214.5 36V38M215.5 35V37M216.5 35V37M217.5 36V38M218.5 35V37M219.5 35V37M220.5 36V37M221.5 36V38M222.5 36V38M223.5 36V39M224.5 37V39M225.5 35V39M226.5 36V38M227.5 36V37M228.5 36V37M229.5 35V37M230.5 35V37M231.5 35V37M232.5 35V37M233.5 35V37M234.5 35V37M235.5 35V38M236.5 36V38M237.5 36V38M238.5 36V38M239.5 36V38M240.5 36V37M241.5 36V38M242.5 36V37M243.5 35V38M244.5 35V36M245.5 35V37M246.5 36V37M247.5 36V37M248.5 36V38M249.5 37V38M250.5 36V38M251.5 36V37M252.5 36V37M253.5 35V38M254.5 37V38M255.5 36V38M256.5 34V38M257.5 34V37M258.5 36V37M259.5 35V37M260.5 35V37M261.5 35V36M262.5 35V39M263.5 38V39M264.5 36V39M265.5 36V39M266.5 36V39M267.5 35V37M268.5 35V36M269.5 35V39M270.5 38V39M271.5 37V39M272.5 37V39M273.5 36V38M274.5 36V38M275.5 34V37M276.5 34V37M277.5 35V37M278.5 36V37M279.5 36V37M280.5 34V37M281.5 36V37M282.5 35V37M283.5 35V37M284.5 36V37M285.5 36V37M286.5 36V39M287.5 36V38M288.5 36V38M289.5 36V37M290.5 36V39M291.5 36V38M292.5 36V37M293.5 36V38M294.5 37V38M295.5 36V38M296.5 36V39M297.5 36V37M298.5 36V37M299.5 36V37M300.5 36V38M301.5 36V38M302.5 36V39M303.5 36V39M304.5 36V37M305.5 36V37M306.5 34V38M307.5 35V38M308.5 35V37M309.5 36V38M310.5 37V39M311.5 38V39M312.5 36V39M313.5 36V38M314.5 36V38M315.5 37V38M316.5 36V38M317.5 35V37M318.5 35V37M319.5 35V36M320.5 35V38M321.5 36V38M322.5 36V37M323.5 36V37M324.5 35V37M325.5 35V37M326.5 36V38M327.5 36V37M328.5 36V37M329.5 36V37M330.5 36V38M331.5 36V38M332.5 36V37M333.5 34V37M334.5 34V37M335.5 36V38M336.5 36V38M337.5 36V37M338.5 36V37M339.5 35V37M340.5 35V38M341.5 34V38M342.5 35V36M343.5 35V36M344.5 34V36M345.5 34V37M346.5 36V37M347.5 34V37M348.5 34V35M349.5 34V37M350.5 35V37M351.5 35V36M352.5 35V36M353.5 35V36M354.5 35V36M355.5 34V36M356.5 34V35M357.5 34V38M358.5 34V38M359.5 34V36M360.5 34V36M361.5 34V36M362.5 35V36M363.5 35V36M364.5 35V37M365.5 36V37M366.5 35V37M367.5 35V36M368.5 35V36M369.5 35V36M370.5 35V36M371.5 34V36M372.5 35V36M373.5 35V36M374.5 34V36M375.5 34V36M376.5 35V36M377.5 35V38M378.5 36V38M379.5 13V37M380.5 35V38M381.5 34V38M382.5 34V35M383.5 34V36M384.5 35V36M385.5 34V36M386.5 35V36M387.5 34V36M388.5 34V36M389.5 35V36M390.5 35V36M391.5 35V37M392.5 35V37M393.5 15V36M394.5 34V37M395.5 36V37M396.5 34V37M397.5 34V36M398.5 34V35M399.5 34V37M400.5 36V37M401.5 36V37M402.5 35V37M403.5 35V36M404.5 35V38M405.5 35V37M406.5 35V37M407.5 33V36M408.5 33V36M409.5 34V36M410.5 34V37M411.5 36V37M412.5 35V37M413.5 36V37M414.5 34V37M415.5 35V36M416.5 35V37M417.5 35V37M418.5 35V36M419.5 34V36M420.5 34V37M421.5 35V37M422.5 35V36M423.5 34V36M424.5 34V36M425.5 34V37M426.5 35V38M427.5 37V38M428.5 36V38M429.5 36V38M430.5 36V38M431.5 36V37M432.5 36V38M433.5 36V38M434.5 36V37M435.5 36V37M436.5 36V38M437.5 37V39M438.5 36V39M439.5 36V37M440.5 36V38M441.5 10V38M442.5 10V37M443.5 36V37M444.5 35V37M445.5 35V37M446.5 35V37M447.5 36V37M448.5 36V38M449.5 36V37M450.5 36V37M451.5 36V37M452.5 34V37M453.5 34V38M454.5 16V38M455.5 16V36M456.5 35V37M457.5 35V37M458.5 35V36M459.5 35V36M460.5 35V36M461.5 35V37M462.5 35V38M463.5 14V38M464.5 35V37M465.5 35V39M466.5 36V37M467.5 14V37M468.5 36V37M469.5 36V38M470.5 13V38M471.5 13V37M472.5 35V37M473.5 34V37M474.5 34V36M475.5 35V37M476.5 35V37M477.5 35V37M478.5 35V36M479.5 35V37M480.5 36V38M481.5 35V38M482.5 34V36M483.5 34V35M484.5 34V37M485.5 35V37M486.5 35V37M487.5 36V37M488.5 36V38M489.5 36V38M490.5 16V37M491.5 16V37M492.5 35V37M493.5 35V37M494.5 35V37M495.5 35V36M496.5 35V36M497.5 35V37M498.5 35V37M499.5 36V37M500.5 36V38M501.5 37V38M502.5 37V38M503.5 34V38M504.5 34V37M505.5 34V37M506.5 34V38M507.5 36V38M508.5 35V38M509.5 35V37M510.5 35V37M511.5 17V37M512.5 17V37M513.5 35V37M514.5 34V36M515.5 34V36M516.5 35V38M517.5 34V37M518.5 34V36M519.5 35V36M520.5 35V37M521.5 15V37M522.5 15V37M523.5 36V37M524.5 35V37M525.5 35V37M526.5 36V37M527.5 36V37M528.5 35V37M529.5 35V38M530.5 34V38M531.5 34V37M532.5 35V37M533.5 36V37M534.5 35V37M535.5 36V37M536.5 36V37M537.5 36V38M538.5 16V38M539.5 34V37M540.5 36V38M541.5 34V37M542.5 34V38M543.5 36V38M544.5 35V38M545.5 34V36M546.5 34V38M547.5 37V38M548.5 36V38M549.5 36V37M550.5 35V37M551.5 35V38M552.5 36V38M553.5 35V37M554.5 35V37M555.5 35V37M556.5 35V38M557.5 36V37M558.5 35V38M559.5 35V36M560.5 35V36M561.5 35V38M562.5 34V38M563.5 35V37M564.5 36V38M565.5 36V38M566.5 34V37M567.5 34V35M568.5 34V37M569.5 36V37M570.5 33V37M571.5 33V36M572.5 35V38M573.5 35V38M574.5 35V37M575.5 36V37M576.5 36V37M577.5 35V39M578.5 37V39M579.5 35V38M580.5 36V38M581.5 36V37M582.5 35V37M583.5 35V37M584.5 34V37M585.5 34V37M586.5 35V37M587.5 35V38M588.5 35V38M589.5 35V37M590.5 34V36M591.5 34V36M592.5 35V38M593.5 36V38M594.5 36V37M595.5 36V37M596.5 36V37M597.5 35V38M598.5 35V37M599.5 36V37M600.5 36V39M601.5 37V39M602.5 36V38M603.5 36V38M604.5 34V38M605.5 34V38M606.5 36V38M607.5 36V37M608.5 36V37M609.5 36V37M610.5 36V37M611.5 36V37M612.5 35V37M613.5 34V36M614.5 35V36M615.5 35V37M616.5 36V39M617.5 36V39M618.5 36V37M619.5 12V38M620.5 12V37M621.5 35V37M622.5 35V36M623.5 35V38M624.5 37V38M625.5 36V38M626.5 35V37M627.5 35V38M628.5 37V38M629.5 35V38M630.5 35V36M631.5 35V39M632.5 38V39M633.5 18V39M634.5 18V36M635.5 35V37M636.5 36V37M637.5 36V37M638.5 36V37M639.5 35V37M640.5 35V37M641.5 35V37M642.5 35V37M643.5 35V36M644.5 35V38M645.5 35V38M646.5 35V36M647.5 35V38M648.5 37V38M649.5 35V38M650.5 35V38M651.5 16V38M652.5 16V38M653.5 37V38M654.5 36V38M655.5 36V37M656.5 36V37M657.5 35V37M658.5 35V36M659.5 35V38M660.5 36V38M661.5 36V37M662.5 35V37M663.5 35V37M664.5 36V37M665.5 36V37M666.5 35V38M667.5 35V36M668.5 35V36M669.5 35V38M670.5 35V38M671.5 35V38M672.5 36V38M673.5 36V38M674.5 37V38M675.5 36V38M676.5 36V38M677.5 34V38M678.5 34V35M679.5 34V37M680.5 36V37M681.5 36V37M682.5 35V37M683.5 35V36M684.5 35V38M685.5 35V38M686.5 34V36M687.5 34V36M688.5 35V36M689.5 35V36M690.5 34V36M691.5 34V36M692.5 34V35M693.5 34V35M694.5 34V36M695.5 35V36M696.5 35V37M697.5 34V37M698.5 35V36M699.5 33V36M700.5 33V35M701.5 34V36M702.5 35V36M703.5 35V36M704.5 35V38M705.5 35V38M706.5 34V36M707.5 34V36M708.5 35V36M709.5 16V36M710.5 34V36M711.5 34V36M712.5 35V36M713.5 35V36M714.5 34V36M715.5 34V36M716.5 35V36M717.5 35V36M718.5 33V36M719.5 33V35M720.5 33V36M721.5 34V36M722.5 35V36M723.5 35V36M724.5 35V36M725.5 34V36M726.5 34V36M727.5 34V36M728.5 34V37M729.5 35V37M730.5 35V36M731.5 34V36M732.5 34V36M733.5 14V37M734.5 14V35M735.5 34V37M736.5 36V37M737.5 34V37M738.5 34V36M739.5 34V37M740.5 34V37M741.5 13V35M742.5 13V14M743.5 13V37M744.5 12V37M745.5 12V36M746.5 12V36M747.5 35V37M748.5 35V37M749.5 16V37M750.5 16V37M751.5 34V37M752.5 34V36M753.5 34V36M754.5 35V36M755.5 34V36M756.5 35V36M757.5 35V37M758.5 34V37M759.5 35V37M760.5 34V36M761.5 35V36M762.5 35V37M763.5 35V37M764.5 34V36M765.5 34V35M766.5 34V36M767.5 35V37M768.5 34V37M769.5 34V36M770.5 35V37M771.5 36V37M772.5 35V37M773.5 36V37M774.5 34V37M775.5 34V37M776.5 33V37M777.5 35V36M778.5 35V36M779.5 33V36M780.5 33V38M781.5 35V36M782.5 34V36M783.5 34V36M784.5 34V37M785.5 36V37M786.5 34V37M787.5 36V37M788.5 34V37M789.5 34V37M790.5 36V37M791.5 35V37M792.5 11V36M793.5 11V37M794.5 33V37M795.5 35V36M796.5 34V36M797.5 34V35M798.5 34V37M799.5 36V37M800.5 35V37M801.5 36V37M802.5 34V37M803.5 34V35M804.5 33V35M805.5 34V36M806.5 35V37M807.5 35V36M808.5 35V36M809.5 35V36M810.5 35V37M811.5 35V36M812.5 35V37M813.5 36V37M814.5 33V37M815.5 35V37M816.5 34V37M817.5 35V36M818.5 34V36M819.5 34V37M820.5 36V37M821.5 36V37M822.5 34V37M823.5 34V37M824.5 33V36M825.5 33V36M826.5 34V36M827.5 13V36M828.5 13V35M829.5 34V35M830.5 34V35M831.5 10V35M832.5 34V35M833.5 34V36M834.5 35V36M835.5 33V37M836.5 34V37M837.5 34V36M838.5 35V36M839.5 34V36M840.5 34V35M841.5 34V35M842.5 34V37M843.5 35V37M844.5 34V37M845.5 34V36M846.5 35V36M847.5 35V37M848.5 35V36" stroke="#FF00C0" stroke-width="1"/></g></svg>
<svg style="position:absolute;left:81px;top:451px" width="850" height="6"><path d="M0.5 0 v5 M7.0 0 v3 M13.5 0 v3 M20.1 0 v3 M26.6 0 v3 M33.1 0 v3 M39.6 0 v3 M46.2 0 v3 M52.7 0 v3 M59.2 0 v3 M65.7 0 v3 M72.3 0 v3 M78.8 0 v3 M85.3 0 v5 M91.8 0 v3 M98.3 0 v3 M104.9 0 v3 M111.4 0 v3 M117.9 0 v3 M124.4 0 v3 M131.0 0 v3 M137.5 0 v3 M144.0 0 v3 M150.5 0 v3 M157.1 0 v3 M163.6 0 v3 M170.1 0 v5 M176.6 0 v3 M183.1 0 v3 M189.7 0 v3 M196.2 0 v3 M202.7 0 v3 M209.2 0 v3 M215.8 0 v3 M222.3 0 v3 M228.8 0 v3 M235.3 0 v3 M241.9 0 v3 M248.4 0 v3 M254.9 0 v5 M261.4 0 v3 M267.9 0 v3 M274.5 0 v3 M281.0 0 v3 M287.5 0 v3 M294.0 0 v3 M300.6 0 v3 M307.1 0 v3 M313.6 0 v3 M320.1 0 v3 M326.7 0 v3 M333.2 0 v3 M339.7 0 v5 M346.2 0 v3 M352.7 0 v3 M359.3 0 v3 M365.8 0 v3 M372.3 0 v3 M378.8 0 v3 M385.4 0 v3 M391.9 0 v3 M398.4 0 v3 M404.9 0 v3 M411.5 0 v3 M418.0 0 v3 M424.5 0 v5 M431.0 0 v3 M437.5 0 v3 M444.1 0 v3 M450.6 0 v3 M457.1 0 v3 M463.6 0 v3 M470.2 0 v3 M476.7 0 v3 M483.2 0 v3 M489.7 0 v3 M496.3 0 v3 M502.8 0 v3 M509.3 0 v5 M515.8 0 v3 M522.3 0 v3 M528.9 0 v3 M535.4 0 v3 M541.9 0 v3 M548.4 0 v3 M555.0 0 v3 M561.5 0 v3 M568.0 0 v3 M574.5 0 v3 M581.1 0 v3 M587.6 0 v3 M594.1 0 v5 M600.6 0 v3 M607.1 0 v3 M613.7 0 v3 M620.2 0 v3 M626.7 0 v3 M633.2 0 v3 M639.8 0 v3 M646.3 0 v3 M652.8 0 v3 M659.3 0 v3 M665.9 0 v3 M672.4 0 v3 M678.9 0 v5 M685.4 0 v3 M691.9 0 v3 M698.5 0 v3 M705.0 0 v3 M711.5 0 v3 M718.0 0 v3 M724.6 0 v3 M731.1 0 v3 M737.6 0 v3 M744.1 0 v3 M750.7 0 v3 M757.2 0 v3 M763.7 0 v5 M770.2 0 v3 M776.7 0 v3 M783.3 0 v3 M789.8 0 v3 M796.3 0 v3 M802.8 0 v3 M809.4 0 v3 M815.9 0 v3 M822.4 0 v3 M828.9 0 v3 M835.5 0 v3 M842.0 0 v3 M848.5 0 v5" stroke="#000" stroke-width="1" shape-rendering="crispEdges"/></svg>
<div style="position:absolute;left:51px;top:457px;width:61px;text-align:center;font-size:11px;line-height:13px;white-space:nowrap">0</div>
<div style="position:absolute;left:136px;top:457px;width:61px;text-align:center;font-size:11px;line-height:13px;white-space:nowrap">128</div>
<div style="position:absolute;left:221px;top:457px;width:61px;text-align:center;font-size:11px;line-height:13px;white-space:nowrap">256</div>
<div style="position:absolute;left:305px;top:457px;width:61px;text-align:center;font-size:11px;line-height:13px;white-space:nowrap">384</div>
<div style="position:absolute;left:390px;top:457px;width:61px;text-align:center;font-size:11px;line-height:13px;white-space:nowrap">512</div>
<div style="position:absolute;left:475px;top:457px;width:61px;text-align:center;font-size:11px;line-height:13px;white-space:nowrap">640</div>
<div style="position:absolute;left:560px;top:457px;width:61px;text-align:center;font-size:11px;line-height:13px;white-space:nowrap">768</div>
<div style="position:absolute;left:645px;top:457px;width:61px;text-align:center;font-size:11px;line-height:13px;white-space:nowrap">896</div>
<div style="position:absolute;left:729px;top:457px;width:61px;text-align:center;font-size:11px;line-height:13px;white-space:nowrap">1024</div>
<div style="position:absolute;left:814px;top:457px;width:61px;text-align:center;font-size:11px;line-height:13px;white-space:nowrap">1152</div>
<div style="position:absolute;left:899px;top:457px;width:61px;text-align:center;font-size:11px;line-height:13px;white-space:nowrap">1280</div>
<div style="position:absolute;left:74px;top:324px;width:6px;height:1px;background:#000"></div>
<div style="position:absolute;left:21px;top:319px;width:51px;text-align:right;font-size:11px;line-height:13px;white-space:nowrap">150</div>
<div style="position:absolute;left:74px;top:345px;width:6px;height:1px;background:#000"></div>
<div style="position:absolute;left:21px;top:340px;width:51px;text-align:right;font-size:11px;line-height:13px;white-space:nowrap">125</div>
<div style="position:absolute;left:74px;top:365px;width:6px;height:1px;background:#000"></div>
<div style="position:absolute;left:21px;top:360px;width:51px;text-align:right;font-size:11px;line-height:13px;white-space:nowrap">100</div>
<div style="position:absolute;left:74px;top:386px;width:6px;height:1px;background:#000"></div>
<div style="position:absolute;left:21px;top:381px;width:51px;text-align:right;font-size:11px;line-height:13px;white-space:nowrap">75</div>
<div style="position:absolute;left:74px;top:407px;width:6px;height:1px;background:#000"></div>
<div style="position:absolute;left:21px;top:402px;width:51px;text-align:right;font-size:11px;line-height:13px;white-space:nowrap">50</div>
<div style="position:absolute;left:74px;top:427px;width:6px;height:1px;background:#000"></div>
<div style="position:absolute;left:21px;top:422px;width:51px;text-align:right;font-size:11px;line-height:13px;white-space:nowrap">25</div>
<div style="position:absolute;left:74px;top:448px;width:6px;height:1px;background:#000"></div>
<div style="position:absolute;left:21px;top:443px;width:51px;text-align:right;font-size:11px;line-height:13px;white-space:nowrap">0</div>
<div style="position:absolute;left:-55px;top:376px;width:200px;height:13px;text-align:center;font-size:11px;line-height:13px;white-space:nowrap;letter-spacing:-0.35px;transform:rotate(-90deg)">Gain (mV/fC)</div>
<div style="position:absolute;left:34px;top:474px;width:920px;height:160px;background:#C0C0C0;"><div style="position:absolute;left:0;top:0;right:0;height:2px;background:#D9D9D9;"></div><div style="position:absolute;left:0;top:0;bottom:0;width:12px;background:linear-gradient(90deg,#D2D2D2,#D6D6D6 40%,#C4C4C4);"></div><div style="position:absolute;right:0;top:2px;bottom:0;width:14px;background:linear-gradient(90deg,#C2C2C2,#A8A8A8 50%,#888888 90%,#5A5A5A);"></div><div style="position:absolute;left:0;right:0;bottom:0;height:3px;background:linear-gradient(#B4B4B4,#9C9C9C 50%,#858585);"></div></div>
<svg style="position:absolute;left:78px;top:482px" width="853" height="128" shape-rendering="crispEdges"><rect x="0" y="0" width="853" height="128" fill="#E2E2E2"/><rect x="0" y="0" width="852" height="127" fill="#3A3A3A"/><rect x="1" y="1" width="851" height="126" fill="#000"/><g transform="translate(1,1)"><path d="M85.5 0V126M170.5 0V126M255.5 0V126M340.5 0V126M425.5 0V126M510.5 0V126M595.5 0V126M680.5 0V126M765.5 0V126" stroke="#00FF00" stroke-width="1"/><path d="M0.5 71V72M1.5 70V81M2.5 62V81M3.5 55V77M4.5 69V77M5.5 69V79M6.5 55V70M7.5 55V82M8.5 74V82M9.5 69V77M10.5 69V72M11.5 71V118M12.5 58V96M13.5 58V77M14.5 73V80M15.5 57V80M16.5 60V72M17.5 66V72M18.5 69V82M19.5 54V82M20.5 54V66M21.5 43V66M22.5 65V90M23.5 67V90M24.5 75V91M25.5 58V91M26.5 58V62M27.5 61V84M28.5 74V78M29.5 64V75M30.5 54V70M31.5 52V79M32.5 52V64M33.5 63V72M34.5 66V72M35.5 62V77M36.5 76V79M37.5 76V79M38.5 61V78M39.5 61V94M40.5 79V94M41.5 75V88M42.5 75V79M43.5 65V83M44.5 65V79M45.5 70V79M46.5 65V77M47.5 65V77M48.5 68V77M49.5 55V72M50.5 55V83M51.5 70V83M52.5 73V76M53.5 48V76M54.5 59V70M55.5 59V70M56.5 69V83M57.5 81V83M58.5 72V94M59.5 62V94M60.5 52V89M61.5 67V89M62.5 61V81M63.5 80V83M64.5 66V92M65.5 66V75M66.5 68V84M67.5 72V84M68.5 61V74M69.5 64V74M70.5 59V72M71.5 67V72M72.5 61V68M73.5 58V63M74.5 58V100M75.5 72V77M76.5 47V77M77.5 66V72M78.5 49V102M79.5 78V102M80.5 52V101M81.5 52V60M82.5 44V77M83.5 67V77M84.5 64V96M85.5 78V96M86.5 75V97M87.5 86V97M88.5 66V87M89.5 73V94M90.5 74V94M91.5 74V97M92.5 81V97M93.5 68V82M94.5 68V88M95.5 78V84M96.5 78V86M97.5 61V84M98.5 60V76M99.5 75V77M100.5 63V78M101.5 63V84M102.5 67V84M103.5 59V71M104.5 59V85M105.5 75V85M106.5 75V91M107.5 85V91M108.5 85V99M109.5 72V99M110.5 72V96M111.5 78V89M112.5 67V89M113.5 74V76M114.5 69V79M115.5 78V94M116.5 75V94M117.5 75V81M118.5 76V95M119.5 77V95M120.5 53V91M121.5 90V91M122.5 47V91M123.5 57V72M124.5 57V98M125.5 61V98M126.5 61V89M127.5 71V89M128.5 71V76M129.5 73V95M130.5 52V95M131.5 68V82M132.5 68V101M133.5 73V95M134.5 69V89M135.5 71V89M136.5 71V89M137.5 86V89M138.5 88V97M139.5 79V97M140.5 67V80M141.5 51V72M142.5 51V83M143.5 75V90M144.5 68V90M145.5 68V77M146.5 76V93M147.5 87V93M148.5 87V95M149.5 78V95M150.5 78V96M151.5 75V90M152.5 73V103M153.5 73V93M154.5 84V97M155.5 84V87M156.5 63V87M157.5 63V80M158.5 79V100M159.5 75V86M160.5 77V93M161.5 86V93M162.5 88V96M163.5 81V96M164.5 82V89M165.5 79V89M166.5 62V89M167.5 62V91M168.5 78V83M169.5 64V83M170.5 64V93M171.5 85V108M172.5 88V108M173.5 88V110M174.5 97V103M175.5 82V103M176.5 81V83M177.5 81V102M178.5 82V102M179.5 82V111M180.5 94V111M181.5 90V95M182.5 90V93M183.5 58V103M184.5 97V103M185.5 80V101M186.5 80V101M187.5 93V106M188.5 93V99M189.5 87V116M190.5 81V116M191.5 81V96M192.5 95V99M193.5 85V99M194.5 85V94M195.5 68V90M196.5 76V90M197.5 76V97M198.5 73V97M199.5 73V101M200.5 84V101M201.5 65V85M202.5 76V79M203.5 78V93M204.5 81V88M205.5 81V108M206.5 66V108M207.5 66V107M208.5 106V118M209.5 65V118M210.5 87V96M211.5 71V99M212.5 71V89M213.5 79V101M214.5 79V85M215.5 84V92M216.5 91V92M217.5 83V92M218.5 89V97M219.5 65V97M220.5 65V85M221.5 69V85M222.5 69V90M223.5 65V90M224.5 65V84M225.5 83V105M226.5 88V95M227.5 80V100M228.5 97V100M229.5 53V98M230.5 53V71M231.5 64V81M232.5 64V65M233.5 64V93M234.5 54V93M235.5 54V95M236.5 80V105M237.5 72V105M238.5 68V79M239.5 68V91M240.5 76V91M241.5 49V93M242.5 49V96M243.5 66V96M244.5 83V88M245.5 64V84M246.5 64V74M247.5 71V90M248.5 62V90M249.5 62V78M250.5 54V78M251.5 54V71M252.5 61V71M253.5 61V86M254.5 68V73M255.5 68V79M256.5 78V88M257.5 87V101M258.5 72V88M259.5 72V84M260.5 83V94M261.5 61V94M262.5 85V100M263.5 59V100M264.5 60V86M265.5 78V86M266.5 76V85M267.5 76V95M268.5 93V99M269.5 80V99M270.5 80V88M271.5 73V88M272.5 73V93M273.5 80V89M274.5 62V81M275.5 62V78M276.5 77V85M277.5 77V101M278.5 73V101M279.5 73V87M280.5 77V104M281.5 77V92M282.5 85V95M283.5 83V95M284.5 83V103M285.5 77V90M286.5 77V91M287.5 70V91M288.5 55V88M289.5 87V90M290.5 81V98M291.5 73V82M292.5 73V92M293.5 79V92M294.5 79V91M295.5 90V99M296.5 80V99M297.5 69V86M298.5 69V94M299.5 80V85M300.5 80V93M301.5 89V90M302.5 65V90M303.5 65V80M304.5 79V104M305.5 86V97M306.5 77V87M307.5 78V84M308.5 53V96M309.5 53V90M310.5 85V105M311.5 63V86M312.5 63V98M313.5 78V81M314.5 66V82M315.5 75V82M316.5 75V83M317.5 79V97M318.5 83V100M319.5 83V86M320.5 70V86M321.5 70V102M322.5 71V102M323.5 71V102M324.5 97V109M325.5 78V109M326.5 78V105M327.5 71V105M328.5 71V92M329.5 80V91M330.5 76V98M331.5 83V98M332.5 68V88M333.5 68V96M334.5 68V108M335.5 78V108M336.5 66V79M337.5 69V78M338.5 69V104M339.5 93V104M340.5 71V94M341.5 82V94M342.5 74V94M343.5 86V118M344.5 91V118M345.5 91V98M346.5 95V105M347.5 95V99M348.5 71V99M349.5 93V95M350.5 94V100M351.5 93V100M352.5 93V96M353.5 93V95M354.5 91V104M355.5 91V107M356.5 72V107M357.5 72V96M358.5 66V96M359.5 66V96M360.5 89V108M361.5 89V106M362.5 86V110M363.5 93V110M364.5 80V94M365.5 80V90M366.5 89V109M367.5 92V94M368.5 76V100M369.5 98V100M370.5 89V99M371.5 98V108M372.5 93V108M373.5 93V108M374.5 98V108M375.5 94V121M376.5 114V121M377.5 114V121M378.5 93V117M379.5 93V119M380.5 88V119M381.5 84V97M382.5 92V97M383.5 92V105M384.5 78V105M385.5 78V109M386.5 102V126M387.5 88V126M388.5 76V105M389.5 76V117M390.5 78V125M391.5 97V125M392.5 97V104M393.5 79V110M394.5 102V110M395.5 97V103M396.5 98V102M397.5 93V102M398.5 81V102M399.5 81V109M400.5 93V100M401.5 81V94M402.5 81V106M403.5 87V106M404.5 99V122M405.5 89V122M406.5 105V115M407.5 93V107M408.5 106V111M409.5 87V111M410.5 87V108M411.5 95V108M412.5 95V100M413.5 78V104M414.5 78V104M415.5 103V111M416.5 96V106M417.5 96V112M418.5 111V119M419.5 75V119M420.5 94V115M421.5 95V115M422.5 87V97M423.5 87V113M424.5 87V92M425.5 91V116M426.5 98V100M427.5 97V126M428.5 98V126M429.5 91V106M430.5 91V99M431.5 98V113M432.5 104V113M433.5 97V105M434.5 101V118M435.5 82V118M436.5 91V101M437.5 94V101M438.5 94V99M439.5 87V104M440.5 87V103M441.5 100V105M442.5 100V102M443.5 60V102M444.5 60V107M445.5 90V107M446.5 90V118M447.5 103V118M448.5 108V118M449.5 97V118M450.5 97V108M451.5 88V108M452.5 103V105M453.5 104V110M454.5 87V110M455.5 85V116M456.5 85V103M457.5 98V115M458.5 98V108M459.5 84V108M460.5 84V93M461.5 92V126M462.5 102V103M463.5 81V106M464.5 81V110M465.5 98V110M466.5 86V99M467.5 86V117M468.5 102V104M469.5 72V104M470.5 72V90M471.5 89V109M472.5 108V126M473.5 88V126M474.5 88V92M475.5 80V106M476.5 80V113M477.5 86V113M478.5 86V106M479.5 86V112M480.5 94V112M481.5 76V95M482.5 76V107M483.5 78V107M484.5 69V96M485.5 95V98M486.5 97V111M487.5 110V116M488.5 110V118M489.5 102V118M490.5 102V108M491.5 93V104M492.5 93V112M493.5 97V108M494.5 68V98M495.5 88V122M496.5 90V122M497.5 92V102M498.5 101V126M499.5 94V109M500.5 75V95M501.5 86V102M502.5 91V103M503.5 91V93M504.5 80V126M505.5 97V126M506.5 97V105M507.5 102V105M508.5 102V108M509.5 107V118M510.5 91V118M511.5 83V92M512.5 75V99M513.5 75V80M514.5 79V122M515.5 95V96M516.5 82V96M517.5 82V102M518.5 84V120M519.5 89V120M520.5 89V112M521.5 85V112M522.5 85V106M523.5 89V98M524.5 93V102M525.5 101V118M526.5 80V118M527.5 80V96M528.5 95V106M529.5 105V108M530.5 107V113M531.5 97V113M532.5 81V102M533.5 90V102M534.5 89V106M535.5 87V106M536.5 77V97M537.5 77V80M538.5 79V99M539.5 74V99M540.5 72V108M541.5 72V80M542.5 79V102M543.5 84V97M544.5 84V110M545.5 84V108M546.5 84V92M547.5 62V91M548.5 62V101M549.5 82V101M550.5 82V101M551.5 100V107M552.5 89V107M553.5 100V106M554.5 78V106M555.5 78V99M556.5 93V114M557.5 112V114M558.5 95V119M559.5 95V106M560.5 69V124M561.5 69V98M562.5 85V108M563.5 85V94M564.5 80V95M565.5 80V102M566.5 89V110M567.5 109V113M568.5 95V113M569.5 95V99M570.5 94V106M571.5 85V95M572.5 85V116M573.5 87V92M574.5 87V95M575.5 92V103M576.5 85V114M577.5 85V109M578.5 81V109M579.5 81V86M580.5 85V97M581.5 85V97M582.5 82V112M583.5 111V117M584.5 91V117M585.5 91V99M586.5 97V105M587.5 96V118M588.5 92V118M589.5 87V93M590.5 92V112M591.5 95V112M592.5 95V101M593.5 94V101M594.5 94V112M595.5 69V112M596.5 69V104M597.5 95V108M598.5 95V97M599.5 86V97M600.5 86V92M601.5 86V104M602.5 87V90M603.5 81V90M604.5 81V109M605.5 104V111M606.5 81V105M607.5 81V116M608.5 101V116M609.5 73V118M610.5 73V92M611.5 91V113M612.5 66V94M613.5 66V115M614.5 102V115M615.5 76V103M616.5 76V89M617.5 88V112M618.5 89V112M619.5 78V109M620.5 108V109M621.5 93V109M622.5 93V101M623.5 76V101M624.5 81V90M625.5 89V117M626.5 101V117M627.5 77V102M628.5 77V98M629.5 83V98M630.5 89V93M631.5 89V116M632.5 87V116M633.5 84V122M634.5 104V122M635.5 89V105M636.5 89V114M637.5 71V114M638.5 92V101M639.5 83V99M640.5 83V89M641.5 84V103M642.5 93V103M643.5 68V94M644.5 68V87M645.5 79V98M646.5 79V105M647.5 92V105M648.5 92V103M649.5 91V103M650.5 91V118M651.5 95V123M652.5 122V125M653.5 85V125M654.5 88V99M655.5 88V126M656.5 81V126M657.5 81V104M658.5 101V104M659.5 101V126M660.5 88V123M661.5 88V122M662.5 88V93M663.5 88V113M664.5 111V115M665.5 102V115M666.5 102V107M667.5 104V110M668.5 75V110M669.5 75V107M670.5 106V112M671.5 91V112M672.5 87V98M673.5 87V99M674.5 89V107M675.5 105V121M676.5 105V111M677.5 89V111M678.5 89V93M679.5 92V105M680.5 91V105M681.5 91V101M682.5 88V96M683.5 88V104M684.5 84V104M685.5 84V104M686.5 84V100M687.5 84V105M688.5 77V105M689.5 77V111M690.5 97V111M691.5 97V105M692.5 80V119M693.5 117V119M694.5 91V118M695.5 105V108M696.5 80V116M697.5 80V83M698.5 82V106M699.5 90V106M700.5 85V95M701.5 94V100M702.5 95V113M703.5 71V96M704.5 71V123M705.5 117V123M706.5 84V118M707.5 83V85M708.5 83V105M709.5 79V105M710.5 79V96M711.5 87V100M712.5 88V100M713.5 81V97M714.5 81V114M715.5 91V114M716.5 91V123M717.5 83V92M718.5 83V96M719.5 89V96M720.5 89V116M721.5 98V116M722.5 78V109M723.5 78V89M724.5 88V100M725.5 93V102M726.5 79V108M727.5 72V108M728.5 72V110M729.5 102V110M730.5 90V103M731.5 84V91M732.5 84V109M733.5 97V109M734.5 97V125M735.5 102V108M736.5 68V112M737.5 68V89M738.5 88V99M739.5 88V98M740.5 90V106M741.5 90V113M742.5 85V113M743.5 85V96M744.5 87V96M745.5 93V114M746.5 84V114M747.5 84V99M748.5 87V99M749.5 96V112M750.5 86V112M751.5 101V120M752.5 77V120M753.5 99V105M754.5 102V126M755.5 93V103M756.5 93V121M757.5 102V126M758.5 85V126M759.5 85V97M760.5 76V106M761.5 105V126M762.5 85V126M763.5 108V123M764.5 91V123M765.5 74V108M766.5 74V123M767.5 97V123M768.5 87V106M769.5 87V101M770.5 81V101M771.5 68V90M772.5 68V105M773.5 98V105M774.5 98V111M775.5 94V111M776.5 90V102M777.5 96V102M778.5 96V110M779.5 103V106M780.5 103V126M781.5 104V121M782.5 102V112M783.5 102V123M784.5 82V123M785.5 82V100M786.5 92V100M787.5 88V98M788.5 88V117M789.5 76V117M790.5 76V118M791.5 87V91M792.5 87V115M793.5 102V104M794.5 88V103M795.5 88V115M796.5 87V115M797.5 84V88M798.5 84V88M799.5 87V111M800.5 84V111M801.5 84V100M802.5 88V111M803.5 93V119M804.5 78V94M805.5 78V114M806.5 91V114M807.5 91V105M808.5 104V116M809.5 79V116M810.5 80V104M811.5 80V117M812.5 94V108M813.5 92V108M814.5 92V102M815.5 88V102M816.5 94V107M817.5 106V114M818.5 87V110M819.5 87V123M820.5 88V123M821.5 85V114M822.5 90V114M823.5 90V112M824.5 91V112M825.5 90V111M826.5 90V100M827.5 86V113M828.5 86V107M829.5 90V107M830.5 83V91M831.5 83V105M832.5 97V110M833.5 93V117M834.5 90V94M835.5 82V101M836.5 73V101M837.5 73V109M838.5 94V106M839.5 91V120M840.5 91V100M841.5 96V117M842.5 101V117M843.5 90V102M844.5 90V97M845.5 70V97M846.5 70V100M847.5 70V113M848.5 70V108M849.5 82V108M850.5 92V108" stroke="#FFFFFF" stroke-width="1"/></g></svg>
<svg style="position:absolute;left:79px;top:611px" width="852" height="6"><path d="M0.5 0 v5 M7.0 0 v3 M13.6 0 v3 M20.1 0 v3 M26.7 0 v3 M33.2 0 v3 M39.7 0 v3 M46.3 0 v3 M52.8 0 v3 M59.3 0 v3 M65.9 0 v3 M72.4 0 v3 M79.0 0 v3 M85.5 0 v5 M92.0 0 v3 M98.6 0 v3 M105.1 0 v3 M111.7 0 v3 M118.2 0 v3 M124.7 0 v3 M131.3 0 v3 M137.8 0 v3 M144.3 0 v3 M150.9 0 v3 M157.4 0 v3 M164.0 0 v3 M170.5 0 v5 M177.0 0 v3 M183.6 0 v3 M190.1 0 v3 M196.7 0 v3 M203.2 0 v3 M209.7 0 v3 M216.3 0 v3 M222.8 0 v3 M229.3 0 v3 M235.9 0 v3 M242.4 0 v3 M249.0 0 v3 M255.5 0 v5 M262.0 0 v3 M268.6 0 v3 M275.1 0 v3 M281.7 0 v3 M288.2 0 v3 M294.7 0 v3 M301.3 0 v3 M307.8 0 v3 M314.3 0 v3 M320.9 0 v3 M327.4 0 v3 M334.0 0 v3 M340.5 0 v5 M347.0 0 v3 M353.6 0 v3 M360.1 0 v3 M366.7 0 v3 M373.2 0 v3 M379.7 0 v3 M386.3 0 v3 M392.8 0 v3 M399.3 0 v3 M405.9 0 v3 M412.4 0 v3 M419.0 0 v3 M425.5 0 v5 M432.0 0 v3 M438.6 0 v3 M445.1 0 v3 M451.7 0 v3 M458.2 0 v3 M464.7 0 v3 M471.3 0 v3 M477.8 0 v3 M484.3 0 v3 M490.9 0 v3 M497.4 0 v3 M504.0 0 v3 M510.5 0 v5 M517.0 0 v3 M523.6 0 v3 M530.1 0 v3 M536.7 0 v3 M543.2 0 v3 M549.7 0 v3 M556.3 0 v3 M562.8 0 v3 M569.3 0 v3 M575.9 0 v3 M582.4 0 v3 M589.0 0 v3 M595.5 0 v5 M602.0 0 v3 M608.6 0 v3 M615.1 0 v3 M621.7 0 v3 M628.2 0 v3 M634.7 0 v3 M641.3 0 v3 M647.8 0 v3 M654.3 0 v3 M660.9 0 v3 M667.4 0 v3 M674.0 0 v3 M680.5 0 v5 M687.0 0 v3 M693.6 0 v3 M700.1 0 v3 M706.7 0 v3 M713.2 0 v3 M719.7 0 v3 M726.3 0 v3 M732.8 0 v3 M739.3 0 v3 M745.9 0 v3 M752.4 0 v3 M759.0 0 v3 M765.5 0 v5 M772.0 0 v3 M778.6 0 v3 M785.1 0 v3 M791.7 0 v3 M798.2 0 v3 M804.7 0 v3 M811.3 0 v3 M817.8 0 v3 M824.3 0 v3 M830.9 0 v3 M837.4 0 v3 M844.0 0 v3 M850.5 0 v5" stroke="#000" stroke-width="1" shape-rendering="crispEdges"/></svg>
<div style="position:absolute;left:49px;top:617px;width:61px;text-align:center;font-size:11px;line-height:13px;white-space:nowrap">0</div>
<div style="position:absolute;left:134px;top:617px;width:61px;text-align:center;font-size:11px;line-height:13px;white-space:nowrap">128</div>
<div style="position:absolute;left:219px;top:617px;width:61px;text-align:center;font-size:11px;line-height:13px;white-space:nowrap">256</div>
<div style="position:absolute;left:304px;top:617px;width:61px;text-align:center;font-size:11px;line-height:13px;white-space:nowrap">384</div>
<div style="position:absolute;left:389px;top:617px;width:61px;text-align:center;font-size:11px;line-height:13px;white-space:nowrap">512</div>
<div style="position:absolute;left:474px;top:617px;width:61px;text-align:center;font-size:11px;line-height:13px;white-space:nowrap">640</div>
<div style="position:absolute;left:559px;top:617px;width:61px;text-align:center;font-size:11px;line-height:13px;white-space:nowrap">768</div>
<div style="position:absolute;left:644px;top:617px;width:61px;text-align:center;font-size:11px;line-height:13px;white-space:nowrap">896</div>
<div style="position:absolute;left:729px;top:617px;width:61px;text-align:center;font-size:11px;line-height:13px;white-space:nowrap">1024</div>
<div style="position:absolute;left:814px;top:617px;width:61px;text-align:center;font-size:11px;line-height:13px;white-space:nowrap">1152</div>
<div style="position:absolute;left:899px;top:617px;width:61px;text-align:center;font-size:11px;line-height:13px;white-space:nowrap">1280</div>
<div style="position:absolute;left:72px;top:484px;width:6px;height:1px;background:#000"></div>
<div style="position:absolute;left:19px;top:479px;width:51px;text-align:right;font-size:11px;line-height:13px;white-space:nowrap">30</div>
<div style="position:absolute;left:72px;top:505px;width:6px;height:1px;background:#000"></div>
<div style="position:absolute;left:19px;top:500px;width:51px;text-align:right;font-size:11px;line-height:13px;white-space:nowrap">20</div>
<div style="position:absolute;left:72px;top:525px;width:6px;height:1px;background:#000"></div>
<div style="position:absolute;left:19px;top:520px;width:51px;text-align:right;font-size:11px;line-height:13px;white-space:nowrap">10</div>
<div style="position:absolute;left:72px;top:546px;width:6px;height:1px;background:#000"></div>
<div style="position:absolute;left:19px;top:541px;width:51px;text-align:right;font-size:11px;line-height:13px;white-space:nowrap">0</div>
<div style="position:absolute;left:72px;top:567px;width:6px;height:1px;background:#000"></div>
<div style="position:absolute;left:19px;top:562px;width:51px;text-align:right;font-size:11px;line-height:13px;white-space:nowrap">-10</div>
<div style="position:absolute;left:72px;top:587px;width:6px;height:1px;background:#000"></div>
<div style="position:absolute;left:19px;top:582px;width:51px;text-align:right;font-size:11px;line-height:13px;white-space:nowrap">-20</div>
<div style="position:absolute;left:72px;top:608px;width:6px;height:1px;background:#000"></div>
<div style="position:absolute;left:19px;top:603px;width:51px;text-align:right;font-size:11px;line-height:13px;white-space:nowrap">-30</div>
<div style="position:absolute;left:-55px;top:536px;width:200px;height:13px;text-align:center;font-size:11px;line-height:13px;white-space:nowrap;letter-spacing:-0.1px;transform:rotate(-90deg)">Offset (mV)</div>
<div style="position:absolute;left:34px;top:634px;width:920px;height:160px;background:#C0C0C0;"><div style="position:absolute;left:0;top:0;right:0;height:2px;background:#D9D9D9;"></div><div style="position:absolute;left:0;top:0;bottom:0;width:12px;background:linear-gradient(90deg,#D2D2D2,#D6D6D6 40%,#C4C4C4);"></div><div style="position:absolute;right:0;top:2px;bottom:0;width:14px;background:linear-gradient(90deg,#C2C2C2,#A8A8A8 50%,#888888 90%,#5A5A5A);"></div><div style="position:absolute;left:0;right:0;bottom:0;height:3px;background:linear-gradient(#B4B4B4,#9C9C9C 50%,#858585);"></div></div>
<svg style="position:absolute;left:74px;top:642px" width="857" height="128" shape-rendering="crispEdges"><rect x="0" y="0" width="857" height="128" fill="#E2E2E2"/><rect x="0" y="0" width="856" height="127" fill="#3A3A3A"/><rect x="1" y="1" width="855" height="126" fill="#000"/><g transform="translate(1,1)"><path d="M85.5 0V126M171.5 0V126M256.5 0V126M342.5 0V126M427.5 0V126M512.5 0V126M598.5 0V126M683.5 0V126M769.5 0V126" stroke="#00FF00" stroke-width="1"/><path d="M0.5 64V65M1.5 64V67M2.5 64V67M3.5 64V69M4.5 67V69M5.5 60V68M6.5 60V69M7.5 65V69M8.5 58V66M9.5 58V68M10.5 63V68M11.5 63V72M12.5 66V72M13.5 64V69M14.5 62V69M15.5 62V66M16.5 57V63M17.5 57V78M18.5 65V78M19.5 60V68M20.5 60V61M21.5 60V64M22.5 60V67M23.5 62V68M24.5 62V64M25.5 63V67M26.5 66V67M27.5 61V67M28.5 63V66M29.5 62V64M30.5 62V64M31.5 62V69M32.5 62V66M33.5 59V66M34.5 59V65M35.5 63V65M36.5 63V66M37.5 62V66M38.5 62V65M39.5 64V67M40.5 66V69M41.5 60V69M42.5 65V66M43.5 61V66M44.5 61V62M45.5 61V69M46.5 63V66M47.5 63V67M48.5 63V67M49.5 63V68M50.5 67V74M51.5 65V74M52.5 60V68M53.5 58V74M54.5 66V74M55.5 59V67M56.5 61V68M57.5 67V69M58.5 61V68M59.5 61V66M60.5 65V66M61.5 63V69M62.5 63V67M63.5 66V69M64.5 59V68M65.5 59V71M66.5 61V62M67.5 61V67M68.5 64V67M69.5 63V65M70.5 64V71M71.5 65V71M72.5 65V68M73.5 63V68M74.5 59V65M75.5 59V67M76.5 59V66M77.5 59V69M78.5 62V69M79.5 62V68M80.5 57V64M81.5 57V66M82.5 61V63M83.5 59V67M84.5 64V67M85.5 62V126M86.5 125V126M87.5 62V126M88.5 62V63M89.5 62V68M90.5 63V65M91.5 60V67M92.5 65V67M93.5 59V66M94.5 65V68M95.5 66V68M96.5 66V67M97.5 59V67M98.5 66V70M99.5 60V70M100.5 62V64M101.5 62V64M102.5 62V64M103.5 62V70M104.5 64V70M105.5 63V68M106.5 63V65M107.5 59V65M108.5 59V73M109.5 67V68M110.5 62V68M111.5 62V69M112.5 62V69M113.5 62V69M114.5 67V70M115.5 64V68M116.5 64V70M117.5 64V67M118.5 61V67M119.5 58V66M120.5 58V68M121.5 64V68M122.5 64V67M123.5 56V67M124.5 56V62M125.5 61V62M126.5 61V68M127.5 66V69M128.5 58V69M129.5 58V66M130.5 64V66M131.5 63V66M132.5 63V65M133.5 62V64M134.5 62V66M135.5 60V66M136.5 60V68M137.5 59V68M138.5 59V65M139.5 61V65M140.5 58V65M141.5 58V65M142.5 64V66M143.5 62V66M144.5 62V76M145.5 70V76M146.5 59V71M147.5 59V64M148.5 63V71M149.5 64V67M150.5 65V68M151.5 65V68M152.5 65V68M153.5 66V68M154.5 61V68M155.5 63V66M156.5 61V67M157.5 61V64M158.5 60V66M159.5 60V66M160.5 56V66M161.5 63V64M162.5 59V64M163.5 59V64M164.5 63V69M165.5 58V69M166.5 58V60M167.5 59V65M168.5 63V68M169.5 63V68M170.5 60V68M171.5 60V67M172.5 63V69M173.5 63V70M174.5 62V70M175.5 59V68M176.5 59V69M177.5 65V69M178.5 65V73M179.5 64V69M180.5 62V66M181.5 62V66M182.5 62V65M183.5 64V68M184.5 61V68M185.5 61V62M186.5 61V67M187.5 60V67M188.5 60V67M189.5 58V65M190.5 58V71M191.5 61V65M192.5 61V71M193.5 61V71M194.5 58V62M195.5 58V68M196.5 63V70M197.5 57V64M198.5 57V65M199.5 60V67M200.5 61V67M201.5 61V66M202.5 58V66M203.5 57V65M204.5 57V69M205.5 68V71M206.5 60V71M207.5 63V66M208.5 65V67M209.5 59V66M210.5 59V72M211.5 68V72M212.5 62V70M213.5 62V64M214.5 60V66M215.5 65V66M216.5 61V67M217.5 61V68M218.5 65V71M219.5 61V71M220.5 61V69M221.5 64V66M222.5 64V72M223.5 62V72M224.5 61V64M225.5 63V66M226.5 56V66M227.5 56V67M228.5 61V68M229.5 57V62M230.5 57V64M231.5 63V75M232.5 57V75M233.5 61V66M234.5 60V70M235.5 60V64M236.5 59V73M237.5 62V73M238.5 62V65M239.5 62V65M240.5 61V65M241.5 61V68M242.5 59V68M243.5 59V68M244.5 56V68M245.5 63V67M246.5 61V67M247.5 61V63M248.5 60V70M249.5 60V61M250.5 57V67M251.5 57V65M252.5 62V69M253.5 62V69M254.5 62V69M255.5 63V69M256.5 59V66M257.5 65V68M258.5 59V68M259.5 60V64M260.5 62V67M261.5 66V68M262.5 64V69M263.5 60V65M264.5 60V65M265.5 61V64M266.5 60V71M267.5 60V63M268.5 62V67M269.5 64V69M270.5 61V69M271.5 63V65M272.5 62V68M273.5 61V63M274.5 61V69M275.5 64V69M276.5 60V66M277.5 60V61M278.5 60V62M279.5 60V64M280.5 55V65M281.5 63V65M282.5 62V68M283.5 62V63M284.5 59V63M285.5 62V68M286.5 63V68M287.5 61V64M288.5 61V65M289.5 62V65M290.5 62V67M291.5 65V67M292.5 59V66M293.5 59V63M294.5 61V64M295.5 61V64M296.5 63V69M297.5 59V66M298.5 59V67M299.5 66V71M300.5 62V71M301.5 55V64M302.5 55V67M303.5 59V62M304.5 59V67M305.5 62V67M306.5 62V66M307.5 61V65M308.5 60V69M309.5 57V61M310.5 57V65M311.5 57V65M312.5 57V69M313.5 66V69M314.5 62V67M315.5 61V63M316.5 61V66M317.5 64V66M318.5 56V65M319.5 56V60M320.5 58V60M321.5 58V64M322.5 63V65M323.5 63V68M324.5 61V64M325.5 61V69M326.5 68V70M327.5 58V70M328.5 57V59M329.5 57V61M330.5 60V62M331.5 55V68M332.5 55V64M333.5 62V65M334.5 64V68M335.5 59V68M336.5 59V62M337.5 61V71M338.5 57V71M339.5 57V68M340.5 64V68M341.5 56V65M342.5 64V65M343.5 61V65M344.5 61V64M345.5 59V64M346.5 63V65M347.5 61V69M348.5 55V62M349.5 55V61M350.5 58V62M351.5 61V70M352.5 64V70M353.5 60V65M354.5 60V64M355.5 63V70M356.5 63V70M357.5 55V64M358.5 55V67M359.5 64V67M360.5 57V65M361.5 57V64M362.5 61V64M363.5 59V74M364.5 59V63M365.5 60V69M366.5 59V69M367.5 54V61M368.5 54V63M369.5 58V63M370.5 59V63M371.5 59V70M372.5 59V63M373.5 57V63M374.5 62V68M375.5 62V68M376.5 61V63M377.5 60V63M378.5 62V69M379.5 62V69M380.5 62V63M381.5 58V63M382.5 59V63M383.5 59V64M384.5 56V64M385.5 56V63M386.5 61V63M387.5 59V64M388.5 61V64M389.5 60V65M390.5 60V70M391.5 64V70M392.5 63V65M393.5 59V64M394.5 59V60M395.5 59V66M396.5 57V62M397.5 57V65M398.5 60V64M399.5 60V68M400.5 57V63M401.5 56V66M402.5 58V66M403.5 55V67M404.5 55V61M405.5 60V64M406.5 60V64M407.5 56V61M408.5 58V60M409.5 58V59M410.5 54V59M411.5 54V62M412.5 60V62M413.5 60V68M414.5 63V68M415.5 61V64M416.5 62V64M417.5 58V63M418.5 60V68M419.5 59V68M420.5 59V62M421.5 61V64M422.5 60V64M423.5 60V64M424.5 58V63M425.5 58V62M426.5 56V62M427.5 56V63M428.5 58V61M429.5 60V64M430.5 59V64M431.5 55V65M432.5 64V66M433.5 56V66M434.5 58V61M435.5 57V67M436.5 57V67M437.5 58V67M438.5 61V63M439.5 61V65M440.5 63V65M441.5 59V69M442.5 66V69M443.5 59V67M444.5 55V61M445.5 55V67M446.5 62V66M447.5 60V63M448.5 60V62M449.5 59V69M450.5 61V69M451.5 61V64M452.5 56V64M453.5 56V63M454.5 52V58M455.5 52V63M456.5 61V63M457.5 56V63M458.5 56V59M459.5 58V62M460.5 61V65M461.5 60V67M462.5 64V67M463.5 61V65M464.5 64V67M465.5 62V67M466.5 59V66M467.5 59V67M468.5 60V67M469.5 59V62M470.5 61V63M471.5 55V64M472.5 55V62M473.5 61V63M474.5 62V66M475.5 59V66M476.5 59V61M477.5 60V62M478.5 61V65M479.5 58V65M480.5 58V62M481.5 61V70M482.5 64V69M483.5 54V69M484.5 54V64M485.5 63V68M486.5 62V68M487.5 57V65M488.5 60V65M489.5 60V64M490.5 59V64M491.5 59V65M492.5 64V65M493.5 55V65M494.5 55V59M495.5 58V65M496.5 61V65M497.5 64V69M498.5 60V69M499.5 60V64M500.5 62V71M501.5 60V71M502.5 66V67M503.5 60V67M504.5 65V66M505.5 58V70M506.5 62V70M507.5 56V63M508.5 56V58M509.5 57V67M510.5 58V62M511.5 58V64M512.5 63V66M513.5 59V67M514.5 66V68M515.5 62V68M516.5 57V63M517.5 57V64M518.5 58V66M519.5 63V66M520.5 63V65M521.5 58V68M522.5 67V68M523.5 58V68M524.5 59V62M525.5 59V65M526.5 59V69M527.5 61V69M528.5 61V69M529.5 64V69M530.5 65V67M531.5 63V66M532.5 63V70M533.5 60V70M534.5 61V67M535.5 61V65M536.5 59V68M537.5 59V64M538.5 60V64M539.5 60V62M540.5 60V65M541.5 59V61M542.5 59V66M543.5 64V66M544.5 58V65M545.5 57V63M546.5 57V64M547.5 57V63M548.5 56V60M549.5 59V67M550.5 62V67M551.5 62V66M552.5 58V66M553.5 60V66M554.5 61V67M555.5 61V69M556.5 59V69M557.5 63V67M558.5 60V67M559.5 62V66M560.5 61V66M561.5 60V66M562.5 57V61M563.5 58V63M564.5 59V66M565.5 62V66M566.5 58V66M567.5 61V66M568.5 59V62M569.5 56V62M570.5 56V65M571.5 64V68M572.5 61V68M573.5 61V66M574.5 56V66M575.5 56V65M576.5 57V65M577.5 59V63M578.5 62V70M579.5 62V68M580.5 61V65M581.5 61V65M582.5 62V65M583.5 64V65M584.5 60V69M585.5 58V69M586.5 58V69M587.5 61V69M588.5 61V65M589.5 63V65M590.5 62V66M591.5 63V66M592.5 58V68M593.5 59V68M594.5 59V66M595.5 60V67M596.5 63V67M597.5 63V70M598.5 57V70M599.5 57V60M600.5 59V61M601.5 60V65M602.5 54V65M603.5 54V67M604.5 62V67M605.5 62V63M606.5 59V63M607.5 61V63M608.5 61V67M609.5 56V67M610.5 56V68M611.5 63V64M612.5 60V64M613.5 60V70M614.5 61V70M615.5 60V66M616.5 60V70M617.5 61V71M618.5 62V71M619.5 60V63M620.5 59V62M621.5 61V65M622.5 61V65M623.5 62V65M624.5 58V65M625.5 62V63M626.5 59V65M627.5 62V65M628.5 62V67M629.5 65V68M630.5 66V68M631.5 63V67M632.5 60V65M633.5 62V65M634.5 55V65M635.5 63V65M636.5 49V64M637.5 56V65M638.5 57V65M639.5 62V68M640.5 61V68M641.5 63V66M642.5 60V64M643.5 62V67M644.5 65V69M645.5 61V66M646.5 61V66M647.5 53V66M648.5 53V63M649.5 59V72M650.5 66V72M651.5 64V68M652.5 60V65M653.5 61V63M654.5 60V64M655.5 62V64M656.5 57V63M657.5 58V61M658.5 56V68M659.5 55V68M660.5 55V68M661.5 58V64M662.5 55V64M663.5 58V66M664.5 60V66M665.5 60V66M666.5 62V66M667.5 64V66M668.5 62V65M669.5 62V67M670.5 56V68M671.5 62V68M672.5 58V66M673.5 58V65M674.5 56V65M675.5 56V65M676.5 63V66M677.5 61V66M678.5 61V67M679.5 62V67M680.5 61V65M681.5 61V68M682.5 59V68M683.5 59V67M684.5 61V67M685.5 61V68M686.5 62V68M687.5 62V68M688.5 58V68M689.5 58V62M690.5 61V67M691.5 61V67M692.5 55V66M693.5 55V63M694.5 59V63M695.5 58V63M696.5 58V67M697.5 62V67M698.5 62V65M699.5 62V65M700.5 63V66M701.5 64V66M702.5 62V65M703.5 59V65M704.5 59V65M705.5 64V68M706.5 58V68M707.5 64V68M708.5 64V68M709.5 58V65M710.5 58V64M711.5 63V68M712.5 64V68M713.5 58V66M714.5 55V65M715.5 55V62M716.5 61V67M717.5 62V67M718.5 61V71M719.5 59V71M720.5 59V63M721.5 60V68M722.5 55V68M723.5 62V68M724.5 62V68M725.5 62V65M726.5 62V69M727.5 62V65M728.5 60V68M729.5 60V65M730.5 64V68M731.5 66V67M732.5 61V67M733.5 61V64M734.5 62V64M735.5 61V64M736.5 60V62M737.5 60V70M738.5 63V70M739.5 58V65M740.5 58V69M741.5 65V69M742.5 62V71M743.5 62V64M744.5 63V70M745.5 62V70M746.5 61V68M747.5 61V67M748.5 56V67M749.5 56V60M750.5 59V71M751.5 60V71M752.5 60V67M753.5 64V67M754.5 61V66M755.5 56V68M756.5 67V69M757.5 62V69M758.5 61V68M759.5 61V66M760.5 60V63M761.5 60V64M762.5 60V68M763.5 63V69M764.5 63V68M765.5 62V68M766.5 62V65M767.5 62V65M768.5 63V73M769.5 64V81M770.5 72V81M771.5 71V77M772.5 70V77M773.5 69V74M774.5 69V76M775.5 67V76M776.5 67V75M777.5 63V75M778.5 63V68M779.5 63V71M780.5 70V71M781.5 63V71M782.5 63V74M783.5 63V74M784.5 62V67M785.5 62V66M786.5 62V66M787.5 60V63M788.5 60V62M789.5 61V67M790.5 65V67M791.5 65V71M792.5 65V66M793.5 58V66M794.5 58V69M795.5 66V71M796.5 63V67M797.5 58V69M798.5 68V69M799.5 59V69M800.5 59V67M801.5 65V69M802.5 62V69M803.5 62V66M804.5 64V67M805.5 60V67M806.5 60V67M807.5 61V67M808.5 65V69M809.5 63V69M810.5 64V68M811.5 60V66M812.5 65V67M813.5 60V67M814.5 64V67M815.5 61V67M816.5 61V63M817.5 62V63M818.5 62V65M819.5 64V69M820.5 64V71M821.5 62V71M822.5 67V69M823.5 59V69M824.5 63V64M825.5 63V66M826.5 63V67M827.5 64V67M828.5 64V65M829.5 59V74M830.5 59V67M831.5 60V67M832.5 60V64M833.5 62V66M834.5 62V66M835.5 65V74M836.5 61V74M837.5 59V64M838.5 59V65M839.5 63V65M840.5 63V66M841.5 62V66M842.5 62V63M843.5 62V68M844.5 57V66M845.5 57V67M846.5 66V70M847.5 59V70M848.5 60V63M849.5 62V66M850.5 60V63M851.5 60V65M852.5 64V66M853.5 64V68M854.5 63V68" stroke="#FFFF00" stroke-width="1"/></g></svg>
<svg style="position:absolute;left:75px;top:771px" width="856" height="6"><path d="M0.5 0 v5 M7.1 0 v3 M13.6 0 v3 M20.2 0 v3 M26.8 0 v3 M33.3 0 v3 M39.9 0 v3 M46.5 0 v3 M53.1 0 v3 M59.6 0 v3 M66.2 0 v3 M72.8 0 v3 M79.3 0 v3 M85.9 0 v5 M92.5 0 v3 M99.0 0 v3 M105.6 0 v3 M112.2 0 v3 M118.7 0 v3 M125.3 0 v3 M131.9 0 v3 M138.5 0 v3 M145.0 0 v3 M151.6 0 v3 M158.2 0 v3 M164.7 0 v3 M171.3 0 v5 M177.9 0 v3 M184.4 0 v3 M191.0 0 v3 M197.6 0 v3 M204.1 0 v3 M210.7 0 v3 M217.3 0 v3 M223.9 0 v3 M230.4 0 v3 M237.0 0 v3 M243.6 0 v3 M250.1 0 v3 M256.7 0 v5 M263.3 0 v3 M269.8 0 v3 M276.4 0 v3 M283.0 0 v3 M289.5 0 v3 M296.1 0 v3 M302.7 0 v3 M309.3 0 v3 M315.8 0 v3 M322.4 0 v3 M329.0 0 v3 M335.5 0 v3 M342.1 0 v5 M348.7 0 v3 M355.2 0 v3 M361.8 0 v3 M368.4 0 v3 M374.9 0 v3 M381.5 0 v3 M388.1 0 v3 M394.7 0 v3 M401.2 0 v3 M407.8 0 v3 M414.4 0 v3 M420.9 0 v3 M427.5 0 v5 M434.1 0 v3 M440.6 0 v3 M447.2 0 v3 M453.8 0 v3 M460.3 0 v3 M466.9 0 v3 M473.5 0 v3 M480.1 0 v3 M486.6 0 v3 M493.2 0 v3 M499.8 0 v3 M506.3 0 v3 M512.9 0 v5 M519.5 0 v3 M526.0 0 v3 M532.6 0 v3 M539.2 0 v3 M545.7 0 v3 M552.3 0 v3 M558.9 0 v3 M565.5 0 v3 M572.0 0 v3 M578.6 0 v3 M585.2 0 v3 M591.7 0 v3 M598.3 0 v5 M604.9 0 v3 M611.4 0 v3 M618.0 0 v3 M624.6 0 v3 M631.1 0 v3 M637.7 0 v3 M644.3 0 v3 M650.9 0 v3 M657.4 0 v3 M664.0 0 v3 M670.6 0 v3 M677.1 0 v3 M683.7 0 v5 M690.3 0 v3 M696.8 0 v3 M703.4 0 v3 M710.0 0 v3 M716.5 0 v3 M723.1 0 v3 M729.7 0 v3 M736.3 0 v3 M742.8 0 v3 M749.4 0 v3 M756.0 0 v3 M762.5 0 v3 M769.1 0 v5 M775.7 0 v3 M782.2 0 v3 M788.8 0 v3 M795.4 0 v3 M801.9 0 v3 M808.5 0 v3 M815.1 0 v3 M821.7 0 v3 M828.2 0 v3 M834.8 0 v3 M841.4 0 v3 M847.9 0 v3 M854.5 0 v5" stroke="#000" stroke-width="1" shape-rendering="crispEdges"/></svg>
<div style="position:absolute;left:45px;top:777px;width:61px;text-align:center;font-size:11px;line-height:13px;white-space:nowrap">0</div>
<div style="position:absolute;left:130px;top:777px;width:61px;text-align:center;font-size:11px;line-height:13px;white-space:nowrap">128</div>
<div style="position:absolute;left:216px;top:777px;width:61px;text-align:center;font-size:11px;line-height:13px;white-space:nowrap">256</div>
<div style="position:absolute;left:301px;top:777px;width:61px;text-align:center;font-size:11px;line-height:13px;white-space:nowrap">384</div>
<div style="position:absolute;left:387px;top:777px;width:61px;text-align:center;font-size:11px;line-height:13px;white-space:nowrap">512</div>
<div style="position:absolute;left:472px;top:777px;width:61px;text-align:center;font-size:11px;line-height:13px;white-space:nowrap">640</div>
<div style="position:absolute;left:557px;top:777px;width:61px;text-align:center;font-size:11px;line-height:13px;white-space:nowrap">768</div>
<div style="position:absolute;left:643px;top:777px;width:61px;text-align:center;font-size:11px;line-height:13px;white-space:nowrap">896</div>
<div style="position:absolute;left:728px;top:777px;width:61px;text-align:center;font-size:11px;line-height:13px;white-space:nowrap">1024</div>
<div style="position:absolute;left:814px;top:777px;width:61px;text-align:center;font-size:11px;line-height:13px;white-space:nowrap">1152</div>
<div style="position:absolute;left:899px;top:777px;width:61px;text-align:center;font-size:11px;line-height:13px;white-space:nowrap">1280</div>
<div style="position:absolute;left:68px;top:644px;width:6px;height:1px;background:#000"></div>
<div style="position:absolute;left:15px;top:639px;width:51px;text-align:right;font-size:11px;line-height:13px;white-space:nowrap">20</div>
<div style="position:absolute;left:68px;top:675px;width:6px;height:1px;background:#000"></div>
<div style="position:absolute;left:15px;top:670px;width:51px;text-align:right;font-size:11px;line-height:13px;white-space:nowrap">15</div>
<div style="position:absolute;left:68px;top:706px;width:6px;height:1px;background:#000"></div>
<div style="position:absolute;left:15px;top:701px;width:51px;text-align:right;font-size:11px;line-height:13px;white-space:nowrap">10</div>
<div style="position:absolute;left:68px;top:737px;width:6px;height:1px;background:#000"></div>
<div style="position:absolute;left:15px;top:732px;width:51px;text-align:right;font-size:11px;line-height:13px;white-space:nowrap">5</div>
<div style="position:absolute;left:68px;top:768px;width:6px;height:1px;background:#000"></div>
<div style="position:absolute;left:15px;top:763px;width:51px;text-align:right;font-size:11px;line-height:13px;white-space:nowrap">0</div>
<div style="position:absolute;left:-55px;top:696px;width:200px;height:13px;text-align:center;font-size:11px;line-height:13px;white-space:nowrap;letter-spacing:-0.16px;transform:rotate(-90deg)">Output noise (mV) @ 2fC</div>
<div style="position:absolute;left:34px;top:794px;width:920px;height:160px;background:#C0C0C0;"><div style="position:absolute;left:0;top:0;right:0;height:2px;background:#D9D9D9;"></div><div style="position:absolute;left:0;top:0;bottom:0;width:12px;background:linear-gradient(90deg,#D2D2D2,#D6D6D6 40%,#C4C4C4);"></div><div style="position:absolute;right:0;top:2px;bottom:0;width:14px;background:linear-gradient(90deg,#C2C2C2,#A8A8A8 50%,#888888 90%,#5A5A5A);"></div><div style="position:absolute;left:0;right:0;bottom:0;height:3px;background:linear-gradient(#B4B4B4,#9C9C9C 50%,#858585);"></div></div>
<svg style="position:absolute;left:80px;top:802px" width="851" height="128" shape-rendering="crispEdges"><rect x="0" y="0" width="851" height="128" fill="#E2E2E2"/><rect x="0" y="0" width="850" height="127" fill="#3A3A3A"/><rect x="1" y="1" width="849" height="126" fill="#000"/><g transform="translate(1,1)"><path d="M85.5 0V126M170.5 0V126M254.5 0V126M339.5 0V126M424.5 0V126M509.5 0V126M594.5 0V126M678.5 0V126M763.5 0V126" stroke="#00FF00" stroke-width="1"/><path d="M0.5 35V36M1.5 35V43M2.5 37V38M3.5 29V48M4.5 38V48M5.5 38V46M6.5 38V46M7.5 38V46M8.5 37V41M9.5 36V39M10.5 38V39M11.5 38V43M12.5 39V41M13.5 36V40M14.5 36V37M15.5 33V45M16.5 33V37M17.5 36V39M18.5 38V43M19.5 35V50M20.5 48V50M21.5 35V49M22.5 39V42M23.5 35V42M24.5 35V43M25.5 36V43M26.5 30V37M27.5 30V39M28.5 34V39M29.5 34V41M30.5 31V39M31.5 31V44M32.5 35V44M33.5 35V36M34.5 35V39M35.5 38V43M36.5 36V44M37.5 36V41M38.5 39V42M39.5 40V42M40.5 39V43M41.5 39V40M42.5 36V43M43.5 42V47M44.5 36V47M45.5 36V41M46.5 34V41M47.5 38V43M48.5 34V43M49.5 36V40M50.5 39V44M51.5 43V47M52.5 27V47M53.5 27V35M54.5 34V38M55.5 37V40M56.5 30V40M57.5 33V37M58.5 33V39M59.5 34V35M60.5 34V45M61.5 35V45M62.5 33V36M63.5 35V40M64.5 39V46M65.5 33V42M66.5 33V40M67.5 34V40M68.5 34V42M69.5 38V42M70.5 33V42M71.5 33V42M72.5 32V42M73.5 32V39M74.5 33V42M75.5 33V36M76.5 32V39M77.5 35V39M78.5 35V39M79.5 35V38M80.5 37V44M81.5 41V44M82.5 35V42M83.5 35V36M84.5 34V39M85.5 34V126M86.5 34V126M87.5 34V37M88.5 36V38M89.5 37V49M90.5 33V49M91.5 36V48M92.5 34V37M93.5 34V43M94.5 42V44M95.5 37V46M96.5 31V46M97.5 30V39M98.5 38V39M99.5 28V39M100.5 28V43M101.5 35V43M102.5 35V41M103.5 27V41M104.5 27V35M105.5 34V41M106.5 36V39M107.5 34V43M108.5 31V35M109.5 29V35M110.5 29V42M111.5 38V45M112.5 37V45M113.5 31V38M114.5 37V40M115.5 31V40M116.5 31V37M117.5 31V38M118.5 31V36M119.5 31V41M120.5 37V41M121.5 37V45M122.5 42V45M123.5 33V43M124.5 33V39M125.5 31V40M126.5 31V41M127.5 34V44M128.5 43V46M129.5 36V46M130.5 37V41M131.5 36V45M132.5 36V42M133.5 29V42M134.5 35V41M135.5 37V43M136.5 37V41M137.5 34V44M138.5 34V42M139.5 34V42M140.5 35V41M141.5 32V37M142.5 32V34M143.5 33V42M144.5 28V34M145.5 28V42M146.5 33V38M147.5 24V38M148.5 24V49M149.5 36V49M150.5 36V43M151.5 32V43M152.5 32V42M153.5 32V42M154.5 32V42M155.5 34V42M156.5 34V48M157.5 36V47M158.5 31V39M159.5 31V38M160.5 26V46M161.5 26V38M162.5 36V44M163.5 28V44M164.5 28V31M165.5 30V36M166.5 32V36M167.5 33V44M168.5 30V44M169.5 34V44M170.5 33V49M171.5 33V46M172.5 32V46M173.5 34V36M174.5 35V39M175.5 32V37M176.5 32V43M177.5 32V43M178.5 31V48M179.5 31V48M180.5 31V48M181.5 31V32M182.5 31V44M183.5 32V40M184.5 32V52M185.5 35V52M186.5 28V42M187.5 28V41M188.5 28V41M189.5 32V35M190.5 32V35M191.5 34V40M192.5 39V41M193.5 40V43M194.5 36V43M195.5 36V39M196.5 32V39M197.5 32V39M198.5 29V35M199.5 29V35M200.5 31V35M201.5 33V37M202.5 32V42M203.5 35V42M204.5 32V36M205.5 32V44M206.5 33V44M207.5 32V34M208.5 32V43M209.5 34V43M210.5 34V44M211.5 36V37M212.5 30V37M213.5 30V35M214.5 33V35M215.5 33V38M216.5 34V36M217.5 35V40M218.5 28V36M219.5 28V37M220.5 35V41M221.5 40V43M222.5 39V43M223.5 29V40M224.5 30V37M225.5 30V47M226.5 30V40M227.5 29V42M228.5 29V37M229.5 27V37M230.5 35V40M231.5 39V46M232.5 36V46M233.5 33V40M234.5 33V38M235.5 28V39M236.5 34V39M237.5 27V35M238.5 29V33M239.5 29V38M240.5 37V39M241.5 36V48M242.5 36V37M243.5 28V37M244.5 28V38M245.5 33V38M246.5 33V38M247.5 37V40M248.5 36V40M249.5 34V41M250.5 38V41M251.5 35V41M252.5 32V41M253.5 32V38M254.5 24V38M255.5 24V34M256.5 33V35M257.5 29V35M258.5 29V35M259.5 24V36M260.5 35V39M261.5 38V40M262.5 36V39M263.5 36V39M264.5 33V39M265.5 33V43M266.5 36V43M267.5 36V41M268.5 27V41M269.5 27V38M270.5 34V42M271.5 21V42M272.5 31V38M273.5 31V35M274.5 33V48M275.5 42V48M276.5 28V43M277.5 33V34M278.5 33V39M279.5 37V38M280.5 32V42M281.5 32V40M282.5 35V44M283.5 35V37M284.5 34V39M285.5 33V35M286.5 30V39M287.5 38V39M288.5 32V39M289.5 35V38M290.5 29V38M291.5 29V33M292.5 32V48M293.5 31V48M294.5 31V38M295.5 26V37M296.5 26V35M297.5 34V36M298.5 33V44M299.5 33V37M300.5 29V37M301.5 29V40M302.5 33V46M303.5 44V46M304.5 32V45M305.5 32V39M306.5 30V39M307.5 30V36M308.5 30V40M309.5 30V40M310.5 29V40M311.5 29V40M312.5 29V43M313.5 33V41M314.5 35V41M315.5 35V37M316.5 31V37M317.5 36V44M318.5 26V44M319.5 26V44M320.5 31V44M321.5 32V43M322.5 32V42M323.5 35V42M324.5 28V39M325.5 28V37M326.5 34V37M327.5 31V36M328.5 26V39M329.5 26V35M330.5 34V36M331.5 34V36M332.5 34V38M333.5 34V38M334.5 30V35M335.5 30V37M336.5 33V37M337.5 31V34M338.5 27V33M339.5 27V36M340.5 34V38M341.5 34V39M342.5 34V37M343.5 32V37M344.5 34V37M345.5 26V35M346.5 30V32M347.5 30V40M348.5 37V40M349.5 29V40M350.5 34V40M351.5 27V37M352.5 34V37M353.5 32V43M354.5 29V43M355.5 29V37M356.5 36V43M357.5 38V47M358.5 29V47M359.5 28V39M360.5 30V39M361.5 30V40M362.5 39V40M363.5 39V43M364.5 41V44M365.5 25V44M366.5 25V33M367.5 32V44M368.5 35V37M369.5 35V42M370.5 33V40M371.5 33V39M372.5 38V44M373.5 31V44M374.5 26V34M375.5 26V42M376.5 31V33M377.5 31V39M378.5 37V39M379.5 34V44M380.5 31V44M381.5 31V37M382.5 34V37M383.5 32V35M384.5 32V35M385.5 34V39M386.5 34V38M387.5 28V36M388.5 28V38M389.5 36V38M390.5 36V42M391.5 34V42M392.5 36V40M393.5 35V39M394.5 34V47M395.5 35V47M396.5 33V41M397.5 37V41M398.5 26V38M399.5 32V38M400.5 30V40M401.5 30V44M402.5 34V44M403.5 34V37M404.5 32V36M405.5 32V41M406.5 33V41M407.5 33V35M408.5 27V45M409.5 27V36M410.5 35V43M411.5 34V43M412.5 31V35M413.5 31V40M414.5 20V40M415.5 30V32M416.5 26V36M417.5 33V36M418.5 33V45M419.5 35V43M420.5 34V36M421.5 35V37M422.5 31V37M423.5 31V37M424.5 32V37M425.5 32V34M426.5 33V42M427.5 36V37M428.5 28V39M429.5 35V39M430.5 35V37M431.5 36V43M432.5 26V43M433.5 32V36M434.5 32V37M435.5 22V37M436.5 22V45M437.5 29V36M438.5 29V42M439.5 33V36M440.5 33V37M441.5 32V37M442.5 25V36M443.5 25V33M444.5 28V33M445.5 31V39M446.5 34V39M447.5 34V35M448.5 32V43M449.5 32V33M450.5 32V41M451.5 27V41M452.5 27V38M453.5 37V45M454.5 30V45M455.5 30V45M456.5 29V45M457.5 29V37M458.5 36V39M459.5 30V39M460.5 30V35M461.5 29V37M462.5 29V36M463.5 33V37M464.5 33V37M465.5 32V39M466.5 38V42M467.5 35V42M468.5 35V41M469.5 30V37M470.5 36V47M471.5 34V47M472.5 34V35M473.5 18V39M474.5 18V33M475.5 28V39M476.5 28V31M477.5 23V33M478.5 32V34M479.5 33V41M480.5 34V41M481.5 30V41M482.5 23V39M483.5 23V36M484.5 24V42M485.5 37V42M486.5 40V41M487.5 34V44M488.5 32V44M489.5 32V38M490.5 36V38M491.5 22V38M492.5 22V37M493.5 35V38M494.5 30V38M495.5 30V35M496.5 34V44M497.5 30V44M498.5 30V39M499.5 29V39M500.5 33V34M501.5 32V45M502.5 32V38M503.5 30V38M504.5 28V31M505.5 28V30M506.5 28V30M507.5 29V43M508.5 32V42M509.5 39V42M510.5 38V41M511.5 34V40M512.5 34V40M513.5 30V35M514.5 33V44M515.5 31V44M516.5 31V37M517.5 33V40M518.5 31V40M519.5 31V41M520.5 35V41M521.5 35V37M522.5 29V37M523.5 29V37M524.5 36V39M525.5 28V37M526.5 28V40M527.5 37V40M528.5 31V38M529.5 32V36M530.5 32V41M531.5 36V40M532.5 33V40M533.5 33V37M534.5 25V37M535.5 29V35M536.5 34V42M537.5 41V43M538.5 30V43M539.5 34V38M540.5 31V35M541.5 26V32M542.5 26V36M543.5 28V36M544.5 28V36M545.5 34V36M546.5 28V35M547.5 28V38M548.5 36V42M549.5 31V42M550.5 27V37M551.5 27V29M552.5 28V35M553.5 33V39M554.5 34V39M555.5 34V37M556.5 27V39M557.5 32V39M558.5 32V36M559.5 33V35M560.5 31V41M561.5 29V32M562.5 29V36M563.5 35V39M564.5 31V39M565.5 34V38M566.5 34V44M567.5 35V42M568.5 35V40M569.5 39V44M570.5 33V44M571.5 38V43M572.5 31V39M573.5 33V36M574.5 33V35M575.5 34V40M576.5 30V40M577.5 30V35M578.5 21V35M579.5 21V40M580.5 30V35M581.5 34V42M582.5 37V38M583.5 37V42M584.5 31V38M585.5 29V34M586.5 33V35M587.5 34V39M588.5 36V39M589.5 33V42M590.5 36V42M591.5 34V37M592.5 34V43M593.5 28V43M594.5 32V40M595.5 31V40M596.5 30V32M597.5 30V40M598.5 29V40M599.5 29V36M600.5 35V38M601.5 35V40M602.5 30V40M603.5 30V35M604.5 24V34M605.5 24V41M606.5 38V41M607.5 29V39M608.5 29V35M609.5 31V37M610.5 31V41M611.5 36V41M612.5 33V37M613.5 33V35M614.5 34V42M615.5 35V42M616.5 35V38M617.5 32V39M618.5 32V37M619.5 30V40M620.5 30V35M621.5 33V44M622.5 26V34M623.5 26V32M624.5 29V31M625.5 29V39M626.5 30V39M627.5 30V41M628.5 32V36M629.5 32V38M630.5 37V41M631.5 26V41M632.5 32V39M633.5 34V41M634.5 34V36M635.5 29V36M636.5 29V39M637.5 26V34M638.5 26V43M639.5 28V37M640.5 28V42M641.5 31V45M642.5 36V45M643.5 36V39M644.5 32V39M645.5 31V33M646.5 31V40M647.5 30V40M648.5 30V39M649.5 33V39M650.5 22V39M651.5 22V33M652.5 22V39M653.5 35V39M654.5 34V36M655.5 31V36M656.5 31V35M657.5 28V35M658.5 28V40M659.5 38V46M660.5 34V46M661.5 33V38M662.5 33V40M663.5 35V40M664.5 34V39M665.5 34V35M666.5 32V37M667.5 32V36M668.5 35V40M669.5 34V40M670.5 31V40M671.5 31V35M672.5 34V41M673.5 40V42M674.5 29V46M675.5 39V46M676.5 23V40M677.5 28V32M678.5 28V36M679.5 33V36M680.5 33V46M681.5 39V42M682.5 39V42M683.5 24V42M684.5 24V41M685.5 31V46M686.5 35V46M687.5 32V36M688.5 32V42M689.5 29V38M690.5 29V41M691.5 27V41M692.5 27V32M693.5 31V43M694.5 34V43M695.5 34V37M696.5 33V37M697.5 32V35M698.5 28V33M699.5 28V38M700.5 36V38M701.5 35V42M702.5 30V36M703.5 30V46M704.5 31V45M705.5 31V40M706.5 34V37M707.5 27V35M708.5 31V32M709.5 31V41M710.5 34V41M711.5 28V49M712.5 45V49M713.5 33V46M714.5 37V42M715.5 28V38M716.5 28V37M717.5 30V37M718.5 30V40M719.5 30V43M720.5 30V47M721.5 42V47M722.5 32V43M723.5 32V34M724.5 31V34M725.5 31V41M726.5 37V40M727.5 36V40M728.5 36V42M729.5 33V42M730.5 33V34M731.5 33V38M732.5 35V38M733.5 30V46M734.5 30V31M735.5 30V41M736.5 35V38M737.5 34V36M738.5 35V37M739.5 35V44M740.5 35V44M741.5 27V38M742.5 27V29M743.5 28V39M744.5 32V39M745.5 30V41M746.5 30V38M747.5 36V42M748.5 40V42M749.5 28V41M750.5 34V38M751.5 31V38M752.5 35V38M753.5 34V40M754.5 36V40M755.5 32V37M756.5 34V44M757.5 25V44M758.5 25V42M759.5 36V40M760.5 36V46M761.5 30V46M762.5 30V45M763.5 31V36M764.5 35V62M765.5 51V63M766.5 48V63M767.5 46V49M768.5 46V53M769.5 52V54M770.5 43V54M771.5 43V51M772.5 38V51M773.5 43V46M774.5 36V44M775.5 36V44M776.5 36V44M777.5 42V44M778.5 35V43M779.5 35V36M780.5 32V36M781.5 35V36M782.5 35V40M783.5 38V43M784.5 37V43M785.5 37V40M786.5 39V47M787.5 30V44M788.5 30V44M789.5 31V36M790.5 34V36M791.5 34V40M792.5 39V41M793.5 33V40M794.5 33V43M795.5 35V37M796.5 34V36M797.5 35V44M798.5 28V44M799.5 33V41M800.5 33V39M801.5 38V40M802.5 30V40M803.5 38V43M804.5 40V44M805.5 32V41M806.5 32V39M807.5 32V37M808.5 32V34M809.5 33V35M810.5 34V37M811.5 34V37M812.5 34V37M813.5 36V40M814.5 38V42M815.5 38V41M816.5 32V45M817.5 32V42M818.5 33V42M819.5 29V38M820.5 29V44M821.5 31V44M822.5 31V36M823.5 35V44M824.5 36V44M825.5 33V45M826.5 33V35M827.5 34V48M828.5 31V40M829.5 31V43M830.5 42V44M831.5 41V44M832.5 35V42M833.5 30V37M834.5 30V36M835.5 32V49M836.5 38V49M837.5 38V41M838.5 40V44M839.5 28V52M840.5 28V42M841.5 32V42M842.5 35V40M843.5 31V36M844.5 31V41M845.5 36V41M846.5 34V40M847.5 32V42M848.5 33V42" stroke="#FF0000" stroke-width="1"/></g></svg>
<svg style="position:absolute;left:81px;top:931px" width="850" height="6"><path d="M0.5 0 v5 M7.0 0 v3 M13.5 0 v3 M20.1 0 v3 M26.6 0 v3 M33.1 0 v3 M39.6 0 v3 M46.2 0 v3 M52.7 0 v3 M59.2 0 v3 M65.7 0 v3 M72.3 0 v3 M78.8 0 v3 M85.3 0 v5 M91.8 0 v3 M98.3 0 v3 M104.9 0 v3 M111.4 0 v3 M117.9 0 v3 M124.4 0 v3 M131.0 0 v3 M137.5 0 v3 M144.0 0 v3 M150.5 0 v3 M157.1 0 v3 M163.6 0 v3 M170.1 0 v5 M176.6 0 v3 M183.1 0 v3 M189.7 0 v3 M196.2 0 v3 M202.7 0 v3 M209.2 0 v3 M215.8 0 v3 M222.3 0 v3 M228.8 0 v3 M235.3 0 v3 M241.9 0 v3 M248.4 0 v3 M254.9 0 v5 M261.4 0 v3 M267.9 0 v3 M274.5 0 v3 M281.0 0 v3 M287.5 0 v3 M294.0 0 v3 M300.6 0 v3 M307.1 0 v3 M313.6 0 v3 M320.1 0 v3 M326.7 0 v3 M333.2 0 v3 M339.7 0 v5 M346.2 0 v3 M352.7 0 v3 M359.3 0 v3 M365.8 0 v3 M372.3 0 v3 M378.8 0 v3 M385.4 0 v3 M391.9 0 v3 M398.4 0 v3 M404.9 0 v3 M411.5 0 v3 M418.0 0 v3 M424.5 0 v5 M431.0 0 v3 M437.5 0 v3 M444.1 0 v3 M450.6 0 v3 M457.1 0 v3 M463.6 0 v3 M470.2 0 v3 M476.7 0 v3 M483.2 0 v3 M489.7 0 v3 M496.3 0 v3 M502.8 0 v3 M509.3 0 v5 M515.8 0 v3 M522.3 0 v3 M528.9 0 v3 M535.4 0 v3 M541.9 0 v3 M548.4 0 v3 M555.0 0 v3 M561.5 0 v3 M568.0 0 v3 M574.5 0 v3 M581.1 0 v3 M587.6 0 v3 M594.1 0 v5 M600.6 0 v3 M607.1 0 v3 M613.7 0 v3 M620.2 0 v3 M626.7 0 v3 M633.2 0 v3 M639.8 0 v3 M646.3 0 v3 M652.8 0 v3 M659.3 0 v3 M665.9 0 v3 M672.4 0 v3 M678.9 0 v5 M685.4 0 v3 M691.9 0 v3 M698.5 0 v3 M705.0 0 v3 M711.5 0 v3 M718.0 0 v3 M724.6 0 v3 M731.1 0 v3 M737.6 0 v3 M744.1 0 v3 M750.7 0 v3 M757.2 0 v3 M763.7 0 v5 M770.2 0 v3 M776.7 0 v3 M783.3 0 v3 M789.8 0 v3 M796.3 0 v3 M802.8 0 v3 M809.4 0 v3 M815.9 0 v3 M822.4 0 v3 M828.9 0 v3 M835.5 0 v3 M842.0 0 v3 M848.5 0 v5" stroke="#000" stroke-width="1" shape-rendering="crispEdges"/></svg>
<div style="position:absolute;left:51px;top:937px;width:61px;text-align:center;font-size:11px;line-height:13px;white-space:nowrap">0</div>
<div style="position:absolute;left:136px;top:937px;width:61px;text-align:center;font-size:11px;line-height:13px;white-space:nowrap">128</div>
<div style="position:absolute;left:221px;top:937px;width:61px;text-align:center;font-size:11px;line-height:13px;white-space:nowrap">256</div>
<div style="position:absolute;left:305px;top:937px;width:61px;text-align:center;font-size:11px;line-height:13px;white-space:nowrap">384</div>
<div style="position:absolute;left:390px;top:937px;width:61px;text-align:center;font-size:11px;line-height:13px;white-space:nowrap">512</div>
<div style="position:absolute;left:475px;top:937px;width:61px;text-align:center;font-size:11px;line-height:13px;white-space:nowrap">640</div>
<div style="position:absolute;left:560px;top:937px;width:61px;text-align:center;font-size:11px;line-height:13px;white-space:nowrap">768</div>
<div style="position:absolute;left:645px;top:937px;width:61px;text-align:center;font-size:11px;line-height:13px;white-space:nowrap">896</div>
<div style="position:absolute;left:729px;top:937px;width:61px;text-align:center;font-size:11px;line-height:13px;white-space:nowrap">1024</div>
<div style="position:absolute;left:814px;top:937px;width:61px;text-align:center;font-size:11px;line-height:13px;white-space:nowrap">1152</div>
<div style="position:absolute;left:899px;top:937px;width:61px;text-align:center;font-size:11px;line-height:13px;white-space:nowrap">1280</div>
<div style="position:absolute;left:74px;top:804px;width:6px;height:1px;background:#000"></div>
<div style="position:absolute;left:21px;top:799px;width:51px;text-align:right;font-size:11px;line-height:13px;white-space:nowrap">800</div>
<div style="position:absolute;left:74px;top:835px;width:6px;height:1px;background:#000"></div>
<div style="position:absolute;left:21px;top:830px;width:51px;text-align:right;font-size:11px;line-height:13px;white-space:nowrap">600</div>
<div style="position:absolute;left:74px;top:866px;width:6px;height:1px;background:#000"></div>
<div style="position:absolute;left:21px;top:861px;width:51px;text-align:right;font-size:11px;line-height:13px;white-space:nowrap">400</div>
<div style="position:absolute;left:74px;top:897px;width:6px;height:1px;background:#000"></div>
<div style="position:absolute;left:21px;top:892px;width:51px;text-align:right;font-size:11px;line-height:13px;white-space:nowrap">200</div>
<div style="position:absolute;left:74px;top:928px;width:6px;height:1px;background:#000"></div>
<div style="position:absolute;left:21px;top:923px;width:51px;text-align:right;font-size:11px;line-height:13px;white-space:nowrap">0</div>
<div style="position:absolute;left:-55px;top:856px;width:200px;height:13px;text-align:center;font-size:11px;line-height:13px;white-space:nowrap;letter-spacing:-0.08px;transform:rotate(-90deg)">Input noise (ENC) @ 2fC</div></body></html>
